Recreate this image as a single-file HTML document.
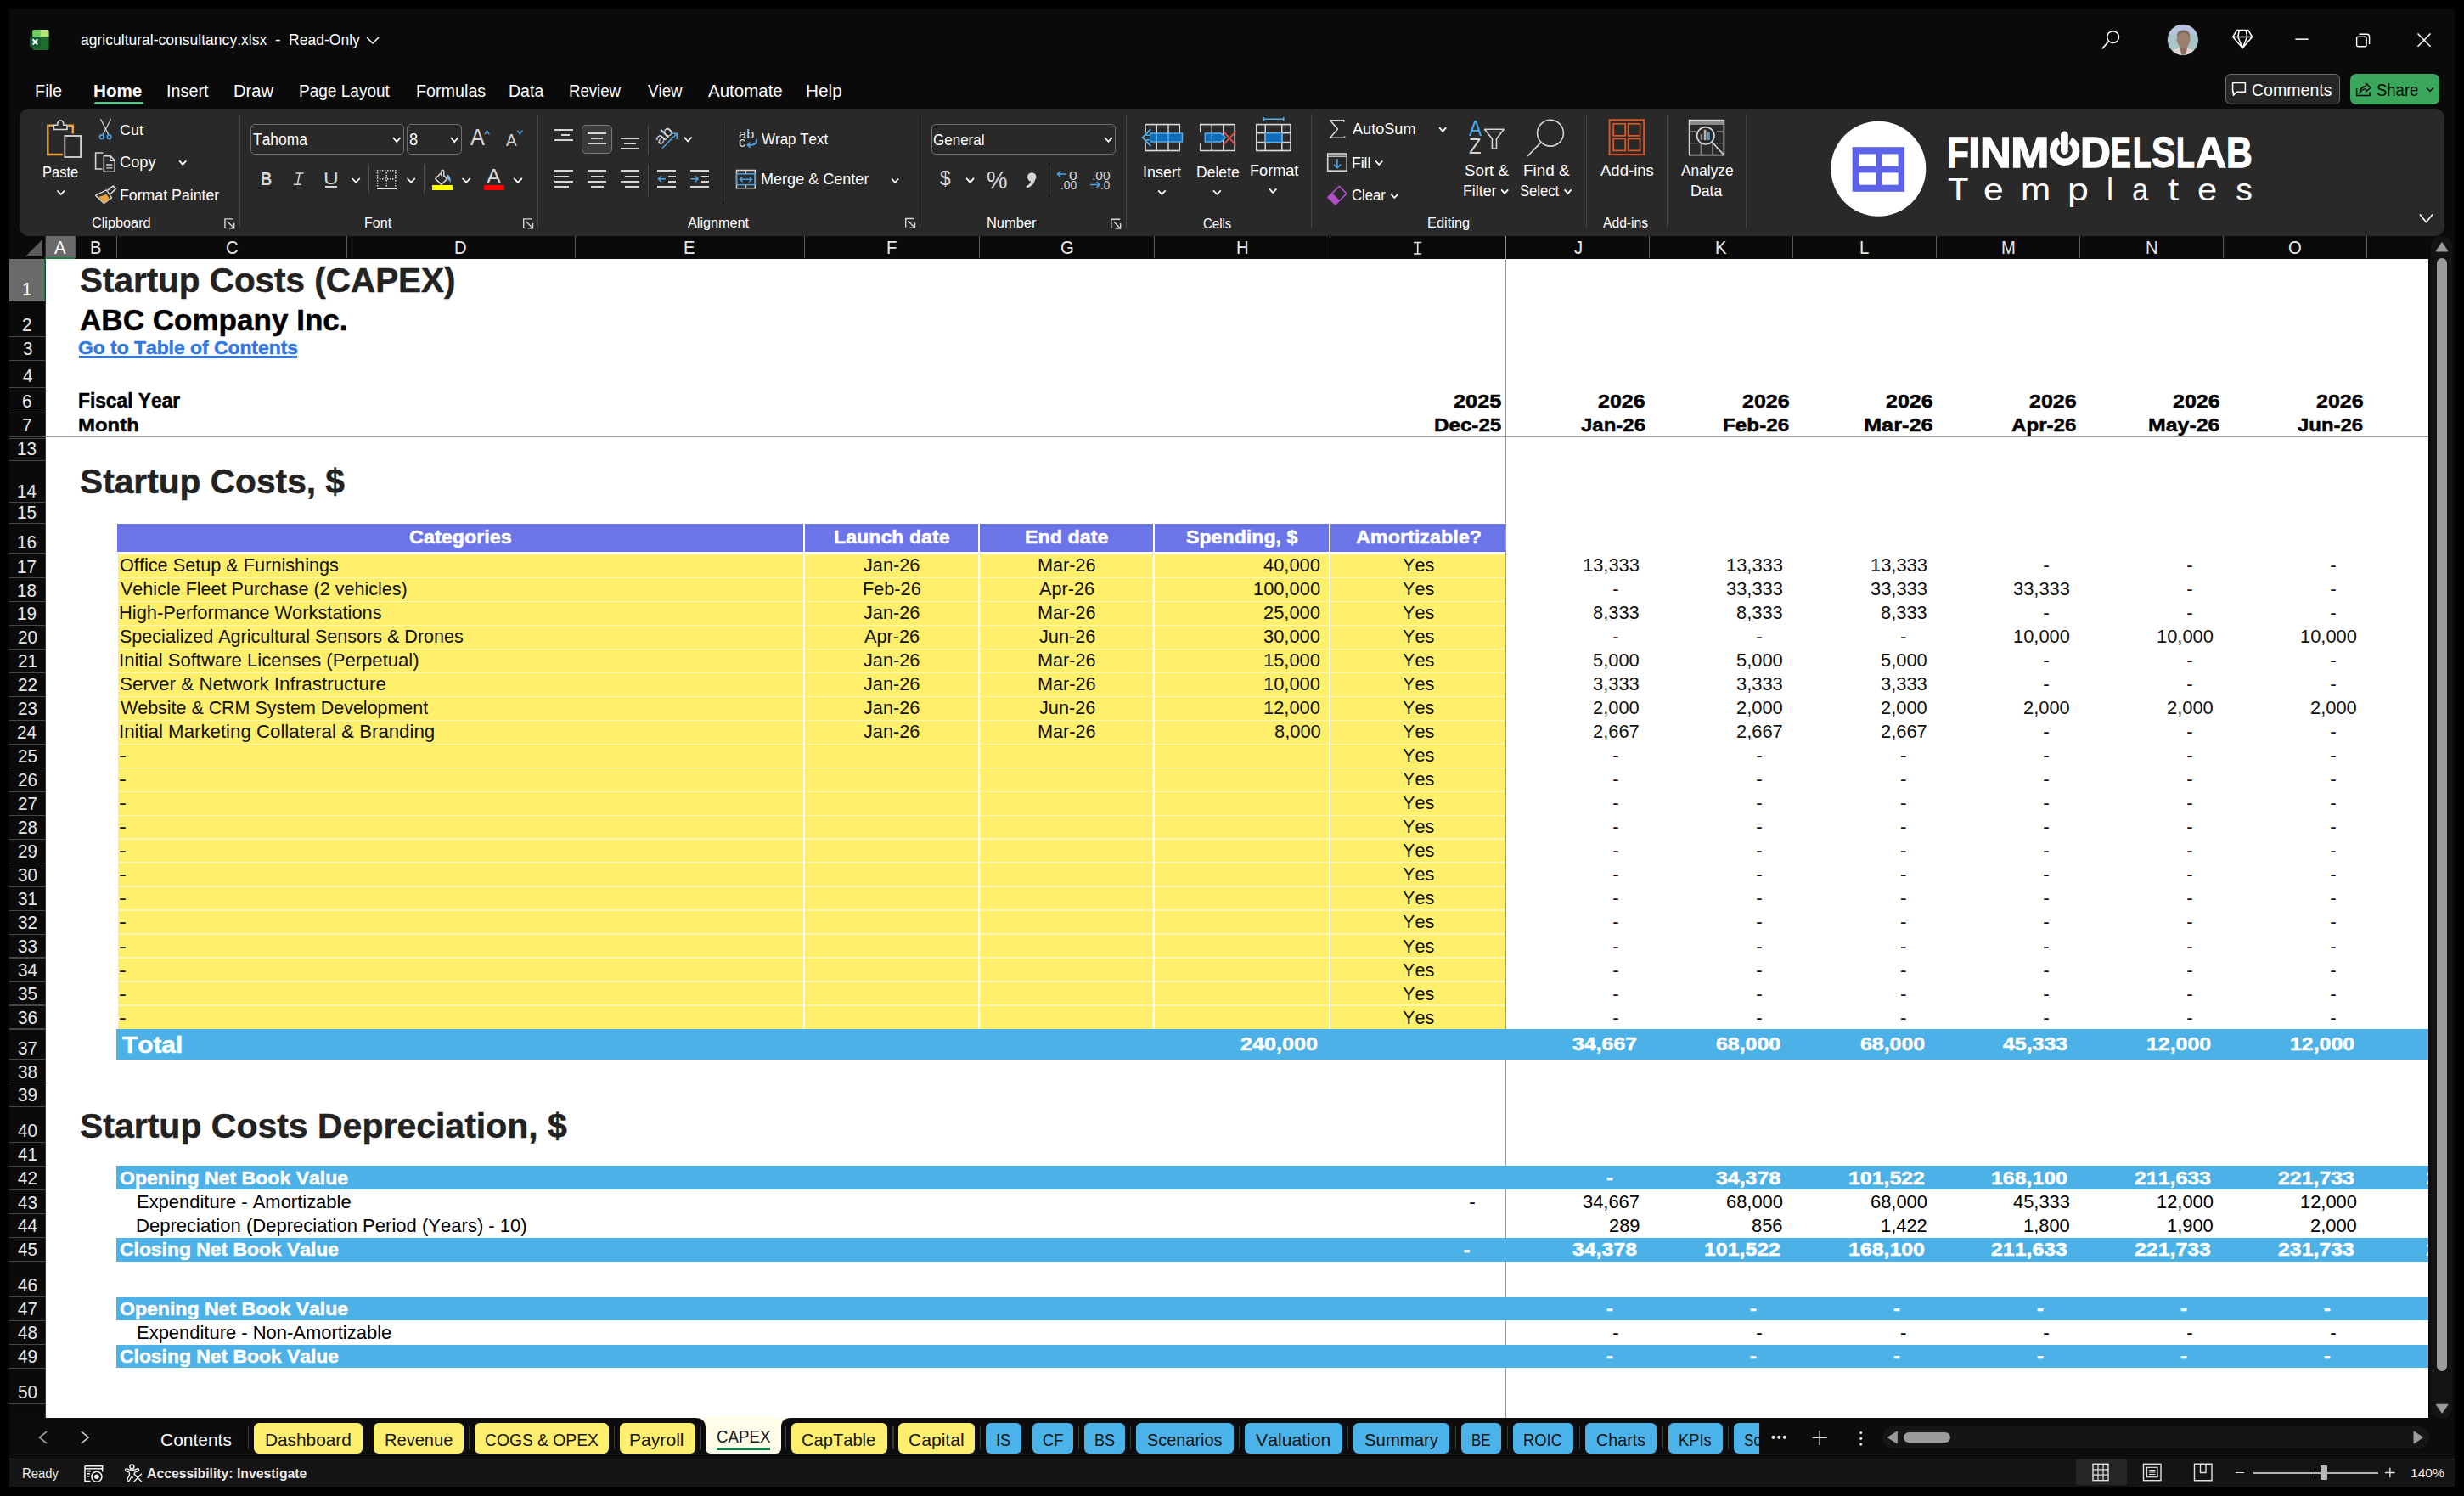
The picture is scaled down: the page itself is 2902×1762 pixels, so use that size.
<!DOCTYPE html>
<html><head><meta charset="utf-8"><style>
html,body{margin:0;padding:0;width:2902px;height:1762px;overflow:hidden;background:#000}
body{position:relative;font-family:"Liberation Sans",sans-serif}
.t{position:absolute;white-space:pre;line-height:1;font-kerning:none;transform-origin:0 0}
.r{position:absolute}
.s{position:absolute;overflow:visible}
</style></head><body>
<div class="r" style="left:0.00px;top:0.00px;width:2902.00px;height:1762.00px;background:#000;"></div>
<div class="r" style="left:11.00px;top:11.00px;width:2879.50px;height:1740.00px;background:#0a0a0a;"></div>
<div class="r" style="left:53.00px;top:305.00px;width:2807.40px;height:1364.80px;background:#fff;"></div>
<div class="r" style="left:11.00px;top:278.00px;width:2849.40px;height:27.00px;background:#0a0a0a;"></div>
<div class="r" style="left:11.00px;top:305.00px;width:42.00px;height:1364.80px;background:#0a0a0a;"></div>
<div class="r" style="left:53.50px;top:278.00px;width:34.50px;height:25.50px;background:#6a6a6a;"></div>
<div class="r" style="left:11.00px;top:305.00px;width:41.00px;height:49.30px;background:#6a6a6a;"></div>
<div class="r" style="left:87.50px;top:278.00px;width:1.00px;height:26.00px;background:#5a5a5a;"></div>
<div class="r" style="left:136.50px;top:278.00px;width:1.00px;height:26.00px;background:#5a5a5a;"></div>
<div class="r" style="left:407.50px;top:278.00px;width:1.00px;height:26.00px;background:#5a5a5a;"></div>
<div class="r" style="left:676.50px;top:278.00px;width:1.00px;height:26.00px;background:#5a5a5a;"></div>
<div class="r" style="left:946.50px;top:278.00px;width:1.00px;height:26.00px;background:#5a5a5a;"></div>
<div class="r" style="left:1152.50px;top:278.00px;width:1.00px;height:26.00px;background:#5a5a5a;"></div>
<div class="r" style="left:1358.50px;top:278.00px;width:1.00px;height:26.00px;background:#5a5a5a;"></div>
<div class="r" style="left:1565.50px;top:278.00px;width:1.00px;height:26.00px;background:#5a5a5a;"></div>
<div class="r" style="left:1772.90px;top:278.00px;width:1.00px;height:26.00px;background:#5a5a5a;"></div>
<div class="r" style="left:1941.50px;top:278.00px;width:1.00px;height:26.00px;background:#5a5a5a;"></div>
<div class="r" style="left:2110.50px;top:278.00px;width:1.00px;height:26.00px;background:#5a5a5a;"></div>
<div class="r" style="left:2280.20px;top:278.00px;width:1.00px;height:26.00px;background:#5a5a5a;"></div>
<div class="r" style="left:2448.50px;top:278.00px;width:1.00px;height:26.00px;background:#5a5a5a;"></div>
<div class="r" style="left:2617.50px;top:278.00px;width:1.00px;height:26.00px;background:#5a5a5a;"></div>
<div class="r" style="left:2786.50px;top:278.00px;width:1.00px;height:26.00px;background:#5a5a5a;"></div>
<div class="r" style="left:53.00px;top:278.00px;width:1.00px;height:26.00px;background:#2a2a2a;"></div>
<div class="r" style="left:53.00px;top:303.00px;width:35.00px;height:2.00px;background:#1f7a3d;"></div>
<div class="r" style="left:52.00px;top:305.00px;width:2.00px;height:49.30px;background:#1f7a3d;"></div>
<div class="r" style="left:11.00px;top:395.80px;width:42.00px;height:1.20px;background:#474747;"></div>
<div class="r" style="left:11.00px;top:423.90px;width:42.00px;height:1.20px;background:#474747;"></div>
<div class="r" style="left:11.00px;top:455.90px;width:42.00px;height:1.20px;background:#474747;"></div>
<div class="r" style="left:11.00px;top:486.00px;width:42.00px;height:1.20px;background:#474747;"></div>
<div class="r" style="left:11.00px;top:513.80px;width:42.00px;height:1.20px;background:#474747;"></div>
<div class="r" style="left:11.00px;top:542.00px;width:42.00px;height:1.20px;background:#474747;"></div>
<div class="r" style="left:11.00px;top:591.10px;width:42.00px;height:1.20px;background:#474747;"></div>
<div class="r" style="left:11.00px;top:616.30px;width:42.00px;height:1.20px;background:#474747;"></div>
<div class="r" style="left:11.00px;top:651.20px;width:42.00px;height:1.20px;background:#474747;"></div>
<div class="r" style="left:11.00px;top:680.10px;width:42.00px;height:1.20px;background:#474747;"></div>
<div class="r" style="left:11.00px;top:708.06px;width:42.00px;height:1.20px;background:#474747;"></div>
<div class="r" style="left:11.00px;top:736.02px;width:42.00px;height:1.20px;background:#474747;"></div>
<div class="r" style="left:11.00px;top:763.98px;width:42.00px;height:1.20px;background:#474747;"></div>
<div class="r" style="left:11.00px;top:791.94px;width:42.00px;height:1.20px;background:#474747;"></div>
<div class="r" style="left:11.00px;top:819.90px;width:42.00px;height:1.20px;background:#474747;"></div>
<div class="r" style="left:11.00px;top:847.86px;width:42.00px;height:1.20px;background:#474747;"></div>
<div class="r" style="left:11.00px;top:875.82px;width:42.00px;height:1.20px;background:#474747;"></div>
<div class="r" style="left:11.00px;top:903.78px;width:42.00px;height:1.20px;background:#474747;"></div>
<div class="r" style="left:11.00px;top:931.74px;width:42.00px;height:1.20px;background:#474747;"></div>
<div class="r" style="left:11.00px;top:959.70px;width:42.00px;height:1.20px;background:#474747;"></div>
<div class="r" style="left:11.00px;top:987.66px;width:42.00px;height:1.20px;background:#474747;"></div>
<div class="r" style="left:11.00px;top:1015.62px;width:42.00px;height:1.20px;background:#474747;"></div>
<div class="r" style="left:11.00px;top:1043.58px;width:42.00px;height:1.20px;background:#474747;"></div>
<div class="r" style="left:11.00px;top:1071.54px;width:42.00px;height:1.20px;background:#474747;"></div>
<div class="r" style="left:11.00px;top:1099.50px;width:42.00px;height:1.20px;background:#474747;"></div>
<div class="r" style="left:11.00px;top:1127.46px;width:42.00px;height:1.20px;background:#474747;"></div>
<div class="r" style="left:11.00px;top:1155.42px;width:42.00px;height:1.20px;background:#474747;"></div>
<div class="r" style="left:11.00px;top:1183.38px;width:42.00px;height:1.20px;background:#474747;"></div>
<div class="r" style="left:11.00px;top:1211.34px;width:42.00px;height:1.20px;background:#474747;"></div>
<div class="r" style="left:11.00px;top:1247.10px;width:42.00px;height:1.20px;background:#474747;"></div>
<div class="r" style="left:11.00px;top:1275.10px;width:42.00px;height:1.20px;background:#474747;"></div>
<div class="r" style="left:11.00px;top:1302.50px;width:42.00px;height:1.20px;background:#474747;"></div>
<div class="r" style="left:11.00px;top:1344.50px;width:42.00px;height:1.20px;background:#474747;"></div>
<div class="r" style="left:11.00px;top:1372.80px;width:42.00px;height:1.20px;background:#474747;"></div>
<div class="r" style="left:11.00px;top:1400.80px;width:42.00px;height:1.20px;background:#474747;"></div>
<div class="r" style="left:11.00px;top:1429.20px;width:42.00px;height:1.20px;background:#474747;"></div>
<div class="r" style="left:11.00px;top:1456.90px;width:42.00px;height:1.20px;background:#474747;"></div>
<div class="r" style="left:11.00px;top:1484.90px;width:42.00px;height:1.20px;background:#474747;"></div>
<div class="r" style="left:11.00px;top:1526.90px;width:42.00px;height:1.20px;background:#474747;"></div>
<div class="r" style="left:11.00px;top:1554.70px;width:42.00px;height:1.20px;background:#474747;"></div>
<div class="r" style="left:11.00px;top:1583.00px;width:42.00px;height:1.20px;background:#474747;"></div>
<div class="r" style="left:11.00px;top:1610.80px;width:42.00px;height:1.20px;background:#474747;"></div>
<div class="r" style="left:11.00px;top:1653.00px;width:42.00px;height:1.20px;background:#474747;"></div>
<div class="r" style="left:11.00px;top:353.80px;width:42.00px;height:1.00px;background:#9a9a9a;"></div>
<div class="r" style="left:11.00px;top:459.80px;width:42.00px;height:1.00px;background:#474747;"></div>
<div class="r" style="left:11.00px;top:516.00px;width:42.00px;height:1.00px;background:#474747;"></div>
<div class="r" style="left:52.50px;top:305.00px;width:1.00px;height:1364.80px;background:#3a3a3a;"></div>
<svg class="s" style="left:30.00px;top:282.00px;" width="20" height="20" viewBox="0 0 20 20"><polygon points="20,0 20,20 0,20" fill="#5a5a5a"/></svg>
<div class="t" style="left:64.24px;top:281.34px;font-size:21.80px;font-weight:400;color:#ffffff;transform:scaleX(0.9300);">A</div>
<div class="t" style="left:105.94px;top:281.34px;font-size:21.80px;font-weight:400;color:#e8e8e8;transform:scaleX(0.9300);">B</div>
<div class="t" style="left:265.55px;top:281.34px;font-size:21.80px;font-weight:400;color:#e8e8e8;transform:scaleX(0.9300);">C</div>
<div class="t" style="left:535.33px;top:281.34px;font-size:21.80px;font-weight:400;color:#e8e8e8;transform:scaleX(0.9300);">D</div>
<div class="t" style="left:805.34px;top:281.34px;font-size:21.80px;font-weight:400;color:#e8e8e8;transform:scaleX(0.9300);">E</div>
<div class="t" style="left:1043.88px;top:281.34px;font-size:21.80px;font-weight:400;color:#e8e8e8;transform:scaleX(0.9300);">F</div>
<div class="t" style="left:1248.86px;top:281.34px;font-size:21.80px;font-weight:400;color:#e8e8e8;transform:scaleX(0.9300);">G</div>
<div class="t" style="left:1455.67px;top:281.34px;font-size:21.80px;font-weight:400;color:#e8e8e8;transform:scaleX(0.9300);">H</div>
<svg class="s" style="left:0;top:0" width="2902" height="400"><path d="M1665.2 285.5 H1674.2 M1665.2 299 H1674.2 M1669.7 285.5 V299" stroke="#e8e8e8" stroke-width="1.6" fill="none"/></svg>
<div class="t" style="left:1853.72px;top:281.34px;font-size:21.80px;font-weight:400;color:#e8e8e8;transform:scaleX(0.9300);">J</div>
<div class="t" style="left:2019.52px;top:281.34px;font-size:21.80px;font-weight:400;color:#e8e8e8;transform:scaleX(0.9300);">K</div>
<div class="t" style="left:2190.22px;top:281.34px;font-size:21.80px;font-weight:400;color:#e8e8e8;transform:scaleX(0.9300);">L</div>
<div class="t" style="left:2356.90px;top:281.34px;font-size:21.80px;font-weight:400;color:#e8e8e8;transform:scaleX(0.9300);">M</div>
<div class="t" style="left:2526.67px;top:281.34px;font-size:21.80px;font-weight:400;color:#e8e8e8;transform:scaleX(0.9300);">N</div>
<div class="t" style="left:2695.12px;top:281.34px;font-size:21.80px;font-weight:400;color:#e8e8e8;transform:scaleX(0.9300);">O</div>
<div class="t" style="left:26.16px;top:330.17px;font-size:21.78px;font-weight:400;color:#ffffff;transform:scaleX(0.9500);">1</div>
<div class="t" style="left:26.45px;top:372.27px;font-size:21.78px;font-weight:400;color:#e8e8e8;transform:scaleX(0.9500);">2</div>
<div class="t" style="left:26.51px;top:400.37px;font-size:21.78px;font-weight:400;color:#e8e8e8;transform:scaleX(0.9500);">3</div>
<div class="t" style="left:26.51px;top:432.37px;font-size:21.78px;font-weight:400;color:#e8e8e8;transform:scaleX(0.9500);">4</div>
<div class="t" style="left:26.38px;top:462.47px;font-size:21.78px;font-weight:400;color:#e8e8e8;transform:scaleX(0.9500);">6</div>
<div class="t" style="left:26.44px;top:490.27px;font-size:21.78px;font-weight:400;color:#e8e8e8;transform:scaleX(0.9500);">7</div>
<div class="t" style="left:20.36px;top:518.47px;font-size:21.78px;font-weight:400;color:#e8e8e8;transform:scaleX(0.9500);">13</div>
<div class="t" style="left:20.21px;top:567.57px;font-size:21.78px;font-weight:400;color:#e8e8e8;transform:scaleX(0.9500);">14</div>
<div class="t" style="left:20.34px;top:592.77px;font-size:21.78px;font-weight:400;color:#e8e8e8;transform:scaleX(0.9500);">15</div>
<div class="t" style="left:20.36px;top:627.67px;font-size:21.78px;font-weight:400;color:#e8e8e8;transform:scaleX(0.9500);">16</div>
<div class="t" style="left:20.43px;top:656.57px;font-size:21.78px;font-weight:400;color:#e8e8e8;transform:scaleX(0.9500);">17</div>
<div class="t" style="left:20.36px;top:684.53px;font-size:21.78px;font-weight:400;color:#e8e8e8;transform:scaleX(0.9500);">18</div>
<div class="t" style="left:20.40px;top:712.49px;font-size:21.78px;font-weight:400;color:#e8e8e8;transform:scaleX(0.9500);">19</div>
<div class="t" style="left:20.58px;top:740.45px;font-size:21.78px;font-weight:400;color:#e8e8e8;transform:scaleX(0.9500);">20</div>
<div class="t" style="left:20.68px;top:768.41px;font-size:21.78px;font-weight:400;color:#e8e8e8;transform:scaleX(0.9500);">21</div>
<div class="t" style="left:20.69px;top:796.37px;font-size:21.78px;font-weight:400;color:#e8e8e8;transform:scaleX(0.9500);">22</div>
<div class="t" style="left:20.63px;top:824.33px;font-size:21.78px;font-weight:400;color:#e8e8e8;transform:scaleX(0.9500);">23</div>
<div class="t" style="left:20.48px;top:852.29px;font-size:21.78px;font-weight:400;color:#e8e8e8;transform:scaleX(0.9500);">24</div>
<div class="t" style="left:20.61px;top:880.25px;font-size:21.78px;font-weight:400;color:#e8e8e8;transform:scaleX(0.9500);">25</div>
<div class="t" style="left:20.63px;top:908.21px;font-size:21.78px;font-weight:400;color:#e8e8e8;transform:scaleX(0.9500);">26</div>
<div class="t" style="left:20.69px;top:936.17px;font-size:21.78px;font-weight:400;color:#e8e8e8;transform:scaleX(0.9500);">27</div>
<div class="t" style="left:20.62px;top:964.13px;font-size:21.78px;font-weight:400;color:#e8e8e8;transform:scaleX(0.9500);">28</div>
<div class="t" style="left:20.66px;top:992.09px;font-size:21.78px;font-weight:400;color:#e8e8e8;transform:scaleX(0.9500);">29</div>
<div class="t" style="left:20.70px;top:1020.05px;font-size:21.78px;font-weight:400;color:#e8e8e8;transform:scaleX(0.9500);">30</div>
<div class="t" style="left:20.81px;top:1048.01px;font-size:21.78px;font-weight:400;color:#e8e8e8;transform:scaleX(0.9500);">31</div>
<div class="t" style="left:20.82px;top:1075.97px;font-size:21.78px;font-weight:400;color:#e8e8e8;transform:scaleX(0.9500);">32</div>
<div class="t" style="left:20.76px;top:1103.93px;font-size:21.78px;font-weight:400;color:#e8e8e8;transform:scaleX(0.9500);">33</div>
<div class="t" style="left:20.60px;top:1131.89px;font-size:21.78px;font-weight:400;color:#e8e8e8;transform:scaleX(0.9500);">34</div>
<div class="t" style="left:20.73px;top:1159.85px;font-size:21.78px;font-weight:400;color:#e8e8e8;transform:scaleX(0.9500);">35</div>
<div class="t" style="left:20.76px;top:1187.81px;font-size:21.78px;font-weight:400;color:#e8e8e8;transform:scaleX(0.9500);">36</div>
<div class="t" style="left:20.82px;top:1223.57px;font-size:21.78px;font-weight:400;color:#e8e8e8;transform:scaleX(0.9500);">37</div>
<div class="t" style="left:20.75px;top:1251.57px;font-size:21.78px;font-weight:400;color:#e8e8e8;transform:scaleX(0.9500);">38</div>
<div class="t" style="left:20.79px;top:1278.97px;font-size:21.78px;font-weight:400;color:#e8e8e8;transform:scaleX(0.9500);">39</div>
<div class="t" style="left:20.86px;top:1320.97px;font-size:21.78px;font-weight:400;color:#e8e8e8;transform:scaleX(0.9500);">40</div>
<div class="t" style="left:20.96px;top:1349.27px;font-size:21.78px;font-weight:400;color:#e8e8e8;transform:scaleX(0.9500);">41</div>
<div class="t" style="left:20.98px;top:1377.27px;font-size:21.78px;font-weight:400;color:#e8e8e8;transform:scaleX(0.9500);">42</div>
<div class="t" style="left:20.91px;top:1405.67px;font-size:21.78px;font-weight:400;color:#e8e8e8;transform:scaleX(0.9500);">43</div>
<div class="t" style="left:20.76px;top:1433.37px;font-size:21.78px;font-weight:400;color:#e8e8e8;transform:scaleX(0.9500);">44</div>
<div class="t" style="left:20.89px;top:1461.37px;font-size:21.78px;font-weight:400;color:#e8e8e8;transform:scaleX(0.9500);">45</div>
<div class="t" style="left:20.91px;top:1503.37px;font-size:21.78px;font-weight:400;color:#e8e8e8;transform:scaleX(0.9500);">46</div>
<div class="t" style="left:20.98px;top:1531.17px;font-size:21.78px;font-weight:400;color:#e8e8e8;transform:scaleX(0.9500);">47</div>
<div class="t" style="left:20.91px;top:1559.47px;font-size:21.78px;font-weight:400;color:#e8e8e8;transform:scaleX(0.9500);">48</div>
<div class="t" style="left:20.95px;top:1587.27px;font-size:21.78px;font-weight:400;color:#e8e8e8;transform:scaleX(0.9500);">49</div>
<div class="t" style="left:20.68px;top:1629.47px;font-size:21.78px;font-weight:400;color:#e8e8e8;transform:scaleX(0.9500);">50</div>
<div class="t" style="left:94.44px;top:310.20px;font-size:40.41px;font-weight:700;color:#222222;transform:scaleX(1.0005);-webkit-text-stroke:0.5px #222222;">Startup Costs (CAPEX)</div>
<div class="t" style="left:93.73px;top:358.70px;font-size:35.32px;font-weight:700;color:#000000;transform:scaleX(0.9927);-webkit-text-stroke:0.5px #000000;">ABC Company Inc.</div>
<div class="t" style="left:91.76px;top:398.94px;font-size:21.22px;font-weight:700;color:#2f78e6;transform:scaleX(1.0769);-webkit-text-stroke:0.5px #2f78e6;">Go to Table of Contents</div>
<div class="r" style="left:92.70px;top:419.30px;width:257.10px;height:2.30px;background:#2f78e6;"></div>
<div class="t" style="left:91.98px;top:461.34px;font-size:23.11px;font-weight:700;color:#000;transform:scaleX(0.9846);-webkit-text-stroke:0.5px #000;">Fiscal Year</div>
<div class="t" style="left:91.90px;top:489.28px;font-size:22.82px;font-weight:700;color:#000;transform:scaleX(1.0491);-webkit-text-stroke:0.5px #000;">Month</div>
<div class="t" style="left:1712.31px;top:461.74px;font-size:22.64px;font-weight:700;color:#000;transform:scaleX(1.1200);-webkit-text-stroke:0.5px #000;">2025</div>
<div class="t" style="left:1689.38px;top:489.26px;font-size:22.97px;font-weight:700;color:#000;transform:scaleX(1.0527);-webkit-text-stroke:0.5px #000;">Dec-25</div>
<div class="t" style="left:1882.33px;top:461.74px;font-size:22.64px;font-weight:700;color:#000;transform:scaleX(1.1035);-webkit-text-stroke:0.5px #000;">2026</div>
<div class="t" style="left:1861.84px;top:489.26px;font-size:22.97px;font-weight:700;color:#000;transform:scaleX(1.0449);-webkit-text-stroke:0.5px #000;">Jan-26</div>
<div class="t" style="left:2051.53px;top:461.74px;font-size:22.64px;font-weight:700;color:#000;transform:scaleX(1.1035);-webkit-text-stroke:0.5px #000;">2026</div>
<div class="t" style="left:2028.88px;top:489.26px;font-size:22.97px;font-weight:700;color:#000;transform:scaleX(1.0565);-webkit-text-stroke:0.5px #000;">Feb-26</div>
<div class="t" style="left:2220.83px;top:461.74px;font-size:22.64px;font-weight:700;color:#000;transform:scaleX(1.1035);-webkit-text-stroke:0.5px #000;">2026</div>
<div class="t" style="left:2194.81px;top:489.26px;font-size:22.97px;font-weight:700;color:#000;transform:scaleX(1.1024);-webkit-text-stroke:0.5px #000;">Mar-26</div>
<div class="t" style="left:2389.63px;top:461.74px;font-size:22.64px;font-weight:700;color:#000;transform:scaleX(1.1035);-webkit-text-stroke:0.5px #000;">2026</div>
<div class="t" style="left:2368.80px;top:489.26px;font-size:22.97px;font-weight:700;color:#000;transform:scaleX(1.0499);-webkit-text-stroke:0.5px #000;">Apr-26</div>
<div class="t" style="left:2558.83px;top:461.74px;font-size:22.64px;font-weight:700;color:#000;transform:scaleX(1.1035);-webkit-text-stroke:0.5px #000;">2026</div>
<div class="t" style="left:2530.04px;top:489.26px;font-size:22.97px;font-weight:700;color:#000;transform:scaleX(1.0834);-webkit-text-stroke:0.5px #000;">May-26</div>
<div class="t" style="left:2727.63px;top:461.74px;font-size:22.64px;font-weight:700;color:#000;transform:scaleX(1.1035);-webkit-text-stroke:0.5px #000;">2026</div>
<div class="t" style="left:2706.14px;top:489.26px;font-size:22.97px;font-weight:700;color:#000;transform:scaleX(1.0406);-webkit-text-stroke:0.5px #000;">Jun-26</div>
<div class="t" style="left:94.33px;top:546.60px;font-size:40.99px;font-weight:700;color:#222222;transform:scaleX(0.9928);-webkit-text-stroke:0.5px #222222;">Startup Costs, $</div>
<div class="r" style="left:138.00px;top:617.00px;width:1635.00px;height:33.00px;background:#6b74e8;"></div>
<div class="t" style="left:482.04px;top:622.33px;font-size:22.53px;font-weight:700;color:#fff;transform:scaleX(1.0385);-webkit-text-stroke:0.5px #fff;">Categories</div>
<div class="t" style="left:982.15px;top:622.33px;font-size:22.53px;font-weight:700;color:#fff;transform:scaleX(1.0298);-webkit-text-stroke:0.5px #fff;">Launch date</div>
<div class="t" style="left:1207.14px;top:622.33px;font-size:22.53px;font-weight:700;color:#fff;transform:scaleX(1.0349);-webkit-text-stroke:0.5px #fff;">End date</div>
<div class="t" style="left:1397.33px;top:622.33px;font-size:22.53px;font-weight:700;color:#fff;transform:scaleX(1.0292);-webkit-text-stroke:0.5px #fff;">Spending, $</div>
<div class="t" style="left:1596.82px;top:622.33px;font-size:22.53px;font-weight:700;color:#fff;transform:scaleX(1.0373);-webkit-text-stroke:0.5px #fff;">Amortizable?</div>
<div class="r" style="left:946.00px;top:617.00px;width:2.00px;height:33.00px;background:#ffffff;"></div>
<div class="r" style="left:1152.00px;top:617.00px;width:2.00px;height:33.00px;background:#ffffff;"></div>
<div class="r" style="left:1358.00px;top:617.00px;width:2.00px;height:33.00px;background:#ffffff;"></div>
<div class="r" style="left:1565.00px;top:617.00px;width:2.00px;height:33.00px;background:#ffffff;"></div>
<div class="r" style="left:138.50px;top:652.60px;width:1634.50px;height:559.34px;background:#ffef6b;"></div>
<div class="r" style="left:138.50px;top:679.90px;width:1634.50px;height:1.60px;background:#fff6b8;"></div>
<div class="r" style="left:138.50px;top:707.86px;width:1634.50px;height:1.60px;background:#fff6b8;"></div>
<div class="r" style="left:138.50px;top:735.82px;width:1634.50px;height:1.60px;background:#fff6b8;"></div>
<div class="r" style="left:138.50px;top:763.78px;width:1634.50px;height:1.60px;background:#fff6b8;"></div>
<div class="r" style="left:138.50px;top:791.74px;width:1634.50px;height:1.60px;background:#fff6b8;"></div>
<div class="r" style="left:138.50px;top:819.70px;width:1634.50px;height:1.60px;background:#fff6b8;"></div>
<div class="r" style="left:138.50px;top:847.66px;width:1634.50px;height:1.60px;background:#fff6b8;"></div>
<div class="r" style="left:138.50px;top:875.62px;width:1634.50px;height:1.60px;background:#fff6b8;"></div>
<div class="r" style="left:138.50px;top:903.58px;width:1634.50px;height:1.60px;background:#fff6b8;"></div>
<div class="r" style="left:138.50px;top:931.54px;width:1634.50px;height:1.60px;background:#fff6b8;"></div>
<div class="r" style="left:138.50px;top:959.50px;width:1634.50px;height:1.60px;background:#fff6b8;"></div>
<div class="r" style="left:138.50px;top:987.46px;width:1634.50px;height:1.60px;background:#fff6b8;"></div>
<div class="r" style="left:138.50px;top:1015.42px;width:1634.50px;height:1.60px;background:#fff6b8;"></div>
<div class="r" style="left:138.50px;top:1043.38px;width:1634.50px;height:1.60px;background:#fff6b8;"></div>
<div class="r" style="left:138.50px;top:1071.34px;width:1634.50px;height:1.60px;background:#fff6b8;"></div>
<div class="r" style="left:138.50px;top:1099.30px;width:1634.50px;height:1.60px;background:#fff6b8;"></div>
<div class="r" style="left:138.50px;top:1127.26px;width:1634.50px;height:1.60px;background:#fff6b8;"></div>
<div class="r" style="left:138.50px;top:1155.22px;width:1634.50px;height:1.60px;background:#fff6b8;"></div>
<div class="r" style="left:138.50px;top:1183.18px;width:1634.50px;height:1.60px;background:#fff6b8;"></div>
<div class="r" style="left:946.00px;top:651.80px;width:2.00px;height:560.14px;background:#ffffff;"></div>
<div class="r" style="left:1152.00px;top:651.80px;width:2.00px;height:560.14px;background:#ffffff;"></div>
<div class="r" style="left:1358.00px;top:651.80px;width:2.00px;height:560.14px;background:#ffffff;"></div>
<div class="r" style="left:1565.00px;top:651.80px;width:2.00px;height:560.14px;background:#ffffff;"></div>
<div class="t" style="left:140.57px;top:654.73px;font-size:22.53px;font-weight:400;color:#111111;transform:scaleX(0.9632);">Office Setup &amp; Furnishings</div>
<div class="t" style="left:1017.44px;top:654.73px;font-size:22.53px;font-weight:400;color:#111111;transform:scaleX(0.9630);">Jan-26</div>
<div class="t" style="left:1221.73px;top:654.73px;font-size:22.53px;font-weight:400;color:#111111;transform:scaleX(0.9630);">Mar-26</div>
<div class="t" style="left:1488.39px;top:655.00px;font-size:22.21px;font-weight:400;color:#111111;transform:scaleX(0.9860);">40,000</div>
<div class="t" style="left:1652.46px;top:654.73px;font-size:22.53px;font-weight:400;color:#111111;transform:scaleX(0.9630);">Yes</div>
<div class="t" style="left:1863.99px;top:655.00px;font-size:22.21px;font-weight:400;color:#111111;transform:scaleX(0.9860);">13,333</div>
<div class="t" style="left:2032.99px;top:655.00px;font-size:22.21px;font-weight:400;color:#111111;transform:scaleX(0.9860);">13,333</div>
<div class="t" style="left:2202.69px;top:655.00px;font-size:22.21px;font-weight:400;color:#111111;transform:scaleX(0.9860);">13,333</div>
<div class="t" style="left:2406.25px;top:654.73px;font-size:22.53px;font-weight:400;color:#111111;transform:scaleX(1.0000);">-</div>
<div class="t" style="left:2575.25px;top:654.73px;font-size:22.53px;font-weight:400;color:#111111;transform:scaleX(1.0000);">-</div>
<div class="t" style="left:2744.25px;top:654.73px;font-size:22.53px;font-weight:400;color:#111111;transform:scaleX(1.0000);">-</div>
<div class="t" style="left:141.51px;top:682.78px;font-size:22.53px;font-weight:400;color:#111111;transform:scaleX(0.9570);">Vehicle Fleet Purchase (2 vehicles)</div>
<div class="t" style="left:1015.52px;top:682.78px;font-size:22.53px;font-weight:400;color:#111111;transform:scaleX(0.9630);">Feb-26</div>
<div class="t" style="left:1224.40px;top:682.78px;font-size:22.53px;font-weight:400;color:#111111;transform:scaleX(0.9630);">Apr-26</div>
<div class="t" style="left:1476.21px;top:683.05px;font-size:22.21px;font-weight:400;color:#111111;transform:scaleX(0.9860);">100,000</div>
<div class="t" style="left:1652.46px;top:682.78px;font-size:22.53px;font-weight:400;color:#111111;transform:scaleX(0.9630);">Yes</div>
<div class="t" style="left:1899.25px;top:682.78px;font-size:22.53px;font-weight:400;color:#111111;transform:scaleX(1.0000);">-</div>
<div class="t" style="left:2032.99px;top:683.05px;font-size:22.21px;font-weight:400;color:#111111;transform:scaleX(0.9860);">33,333</div>
<div class="t" style="left:2202.69px;top:683.05px;font-size:22.21px;font-weight:400;color:#111111;transform:scaleX(0.9860);">33,333</div>
<div class="t" style="left:2370.99px;top:683.05px;font-size:22.21px;font-weight:400;color:#111111;transform:scaleX(0.9860);">33,333</div>
<div class="t" style="left:2575.25px;top:682.78px;font-size:22.53px;font-weight:400;color:#111111;transform:scaleX(1.0000);">-</div>
<div class="t" style="left:2744.25px;top:682.78px;font-size:22.53px;font-weight:400;color:#111111;transform:scaleX(1.0000);">-</div>
<div class="t" style="left:139.81px;top:710.83px;font-size:22.53px;font-weight:400;color:#111111;transform:scaleX(0.9706);">High-Performance Workstations</div>
<div class="t" style="left:1017.44px;top:710.83px;font-size:22.53px;font-weight:400;color:#111111;transform:scaleX(0.9630);">Jan-26</div>
<div class="t" style="left:1221.73px;top:710.83px;font-size:22.53px;font-weight:400;color:#111111;transform:scaleX(0.9630);">Mar-26</div>
<div class="t" style="left:1488.39px;top:711.10px;font-size:22.21px;font-weight:400;color:#111111;transform:scaleX(0.9860);">25,000</div>
<div class="t" style="left:1652.46px;top:710.83px;font-size:22.53px;font-weight:400;color:#111111;transform:scaleX(0.9630);">Yes</div>
<div class="t" style="left:1876.17px;top:711.10px;font-size:22.21px;font-weight:400;color:#111111;transform:scaleX(0.9860);">8,333</div>
<div class="t" style="left:2045.17px;top:711.10px;font-size:22.21px;font-weight:400;color:#111111;transform:scaleX(0.9860);">8,333</div>
<div class="t" style="left:2214.87px;top:711.10px;font-size:22.21px;font-weight:400;color:#111111;transform:scaleX(0.9860);">8,333</div>
<div class="t" style="left:2406.25px;top:710.83px;font-size:22.53px;font-weight:400;color:#111111;transform:scaleX(1.0000);">-</div>
<div class="t" style="left:2575.25px;top:710.83px;font-size:22.53px;font-weight:400;color:#111111;transform:scaleX(1.0000);">-</div>
<div class="t" style="left:2744.25px;top:710.83px;font-size:22.53px;font-weight:400;color:#111111;transform:scaleX(1.0000);">-</div>
<div class="t" style="left:140.62px;top:738.88px;font-size:22.53px;font-weight:400;color:#111111;transform:scaleX(0.9570);">Specialized Agricultural Sensors &amp; Drones</div>
<div class="t" style="left:1018.20px;top:738.88px;font-size:22.53px;font-weight:400;color:#111111;transform:scaleX(0.9630);">Apr-26</div>
<div class="t" style="left:1223.64px;top:738.88px;font-size:22.53px;font-weight:400;color:#111111;transform:scaleX(0.9630);">Jun-26</div>
<div class="t" style="left:1488.39px;top:739.15px;font-size:22.21px;font-weight:400;color:#111111;transform:scaleX(0.9860);">30,000</div>
<div class="t" style="left:1652.46px;top:738.88px;font-size:22.53px;font-weight:400;color:#111111;transform:scaleX(0.9630);">Yes</div>
<div class="t" style="left:1899.25px;top:738.88px;font-size:22.53px;font-weight:400;color:#111111;transform:scaleX(1.0000);">-</div>
<div class="t" style="left:2068.25px;top:738.88px;font-size:22.53px;font-weight:400;color:#111111;transform:scaleX(1.0000);">-</div>
<div class="t" style="left:2237.95px;top:738.88px;font-size:22.53px;font-weight:400;color:#111111;transform:scaleX(1.0000);">-</div>
<div class="t" style="left:2370.89px;top:739.15px;font-size:22.21px;font-weight:400;color:#111111;transform:scaleX(0.9860);">10,000</div>
<div class="t" style="left:2539.89px;top:739.15px;font-size:22.21px;font-weight:400;color:#111111;transform:scaleX(0.9860);">10,000</div>
<div class="t" style="left:2708.89px;top:739.15px;font-size:22.21px;font-weight:400;color:#111111;transform:scaleX(0.9860);">10,000</div>
<div class="t" style="left:139.56px;top:766.93px;font-size:22.53px;font-weight:400;color:#111111;transform:scaleX(0.9811);">Initial Software Licenses (Perpetual)</div>
<div class="t" style="left:1017.44px;top:766.93px;font-size:22.53px;font-weight:400;color:#111111;transform:scaleX(0.9630);">Jan-26</div>
<div class="t" style="left:1221.73px;top:766.93px;font-size:22.53px;font-weight:400;color:#111111;transform:scaleX(0.9630);">Mar-26</div>
<div class="t" style="left:1488.39px;top:767.20px;font-size:22.21px;font-weight:400;color:#111111;transform:scaleX(0.9860);">15,000</div>
<div class="t" style="left:1652.46px;top:766.93px;font-size:22.53px;font-weight:400;color:#111111;transform:scaleX(0.9630);">Yes</div>
<div class="t" style="left:1876.06px;top:767.20px;font-size:22.21px;font-weight:400;color:#111111;transform:scaleX(0.9860);">5,000</div>
<div class="t" style="left:2045.06px;top:767.20px;font-size:22.21px;font-weight:400;color:#111111;transform:scaleX(0.9860);">5,000</div>
<div class="t" style="left:2214.76px;top:767.20px;font-size:22.21px;font-weight:400;color:#111111;transform:scaleX(0.9860);">5,000</div>
<div class="t" style="left:2406.25px;top:766.93px;font-size:22.53px;font-weight:400;color:#111111;transform:scaleX(1.0000);">-</div>
<div class="t" style="left:2575.25px;top:766.93px;font-size:22.53px;font-weight:400;color:#111111;transform:scaleX(1.0000);">-</div>
<div class="t" style="left:2744.25px;top:766.93px;font-size:22.53px;font-weight:400;color:#111111;transform:scaleX(1.0000);">-</div>
<div class="t" style="left:140.58px;top:794.98px;font-size:22.53px;font-weight:400;color:#111111;transform:scaleX(0.9956);">Server &amp; Network Infrastructure</div>
<div class="t" style="left:1017.44px;top:794.98px;font-size:22.53px;font-weight:400;color:#111111;transform:scaleX(0.9630);">Jan-26</div>
<div class="t" style="left:1221.73px;top:794.98px;font-size:22.53px;font-weight:400;color:#111111;transform:scaleX(0.9630);">Mar-26</div>
<div class="t" style="left:1488.39px;top:795.25px;font-size:22.21px;font-weight:400;color:#111111;transform:scaleX(0.9860);">10,000</div>
<div class="t" style="left:1652.46px;top:794.98px;font-size:22.53px;font-weight:400;color:#111111;transform:scaleX(0.9630);">Yes</div>
<div class="t" style="left:1876.17px;top:795.25px;font-size:22.21px;font-weight:400;color:#111111;transform:scaleX(0.9860);">3,333</div>
<div class="t" style="left:2045.17px;top:795.25px;font-size:22.21px;font-weight:400;color:#111111;transform:scaleX(0.9860);">3,333</div>
<div class="t" style="left:2214.87px;top:795.25px;font-size:22.21px;font-weight:400;color:#111111;transform:scaleX(0.9860);">3,333</div>
<div class="t" style="left:2406.25px;top:794.98px;font-size:22.53px;font-weight:400;color:#111111;transform:scaleX(1.0000);">-</div>
<div class="t" style="left:2575.25px;top:794.98px;font-size:22.53px;font-weight:400;color:#111111;transform:scaleX(1.0000);">-</div>
<div class="t" style="left:2744.25px;top:794.98px;font-size:22.53px;font-weight:400;color:#111111;transform:scaleX(1.0000);">-</div>
<div class="t" style="left:141.51px;top:823.03px;font-size:22.53px;font-weight:400;color:#111111;transform:scaleX(0.9520);">Website &amp; CRM System Development</div>
<div class="t" style="left:1017.44px;top:823.03px;font-size:22.53px;font-weight:400;color:#111111;transform:scaleX(0.9630);">Jan-26</div>
<div class="t" style="left:1223.64px;top:823.03px;font-size:22.53px;font-weight:400;color:#111111;transform:scaleX(0.9630);">Jun-26</div>
<div class="t" style="left:1488.39px;top:823.30px;font-size:22.21px;font-weight:400;color:#111111;transform:scaleX(0.9860);">12,000</div>
<div class="t" style="left:1652.46px;top:823.03px;font-size:22.53px;font-weight:400;color:#111111;transform:scaleX(0.9630);">Yes</div>
<div class="t" style="left:1876.06px;top:823.30px;font-size:22.21px;font-weight:400;color:#111111;transform:scaleX(0.9860);">2,000</div>
<div class="t" style="left:2045.06px;top:823.30px;font-size:22.21px;font-weight:400;color:#111111;transform:scaleX(0.9860);">2,000</div>
<div class="t" style="left:2214.76px;top:823.30px;font-size:22.21px;font-weight:400;color:#111111;transform:scaleX(0.9860);">2,000</div>
<div class="t" style="left:2383.06px;top:823.30px;font-size:22.21px;font-weight:400;color:#111111;transform:scaleX(0.9860);">2,000</div>
<div class="t" style="left:2552.06px;top:823.30px;font-size:22.21px;font-weight:400;color:#111111;transform:scaleX(0.9860);">2,000</div>
<div class="t" style="left:2721.06px;top:823.30px;font-size:22.21px;font-weight:400;color:#111111;transform:scaleX(0.9860);">2,000</div>
<div class="t" style="left:139.55px;top:851.08px;font-size:22.53px;font-weight:400;color:#111111;transform:scaleX(0.9880);">Initial Marketing Collateral &amp; Branding</div>
<div class="t" style="left:1017.44px;top:851.08px;font-size:22.53px;font-weight:400;color:#111111;transform:scaleX(0.9630);">Jan-26</div>
<div class="t" style="left:1221.73px;top:851.08px;font-size:22.53px;font-weight:400;color:#111111;transform:scaleX(0.9630);">Mar-26</div>
<div class="t" style="left:1500.56px;top:851.35px;font-size:22.21px;font-weight:400;color:#111111;transform:scaleX(0.9860);">8,000</div>
<div class="t" style="left:1652.46px;top:851.08px;font-size:22.53px;font-weight:400;color:#111111;transform:scaleX(0.9630);">Yes</div>
<div class="t" style="left:1876.31px;top:851.35px;font-size:22.21px;font-weight:400;color:#111111;transform:scaleX(0.9860);">2,667</div>
<div class="t" style="left:2045.31px;top:851.35px;font-size:22.21px;font-weight:400;color:#111111;transform:scaleX(0.9860);">2,667</div>
<div class="t" style="left:2215.01px;top:851.35px;font-size:22.21px;font-weight:400;color:#111111;transform:scaleX(0.9860);">2,667</div>
<div class="t" style="left:2406.25px;top:851.08px;font-size:22.53px;font-weight:400;color:#111111;transform:scaleX(1.0000);">-</div>
<div class="t" style="left:2575.25px;top:851.08px;font-size:22.53px;font-weight:400;color:#111111;transform:scaleX(1.0000);">-</div>
<div class="t" style="left:2744.25px;top:851.08px;font-size:22.53px;font-weight:400;color:#111111;transform:scaleX(1.0000);">-</div>
<div class="t" style="left:140.02px;top:879.13px;font-size:22.53px;font-weight:400;color:#111111;transform:scaleX(1.1818);">-</div>
<div class="t" style="left:1652.46px;top:879.13px;font-size:22.53px;font-weight:400;color:#111111;transform:scaleX(0.9630);">Yes</div>
<div class="t" style="left:1899.25px;top:879.13px;font-size:22.53px;font-weight:400;color:#111111;transform:scaleX(1.0000);">-</div>
<div class="t" style="left:2068.25px;top:879.13px;font-size:22.53px;font-weight:400;color:#111111;transform:scaleX(1.0000);">-</div>
<div class="t" style="left:2237.95px;top:879.13px;font-size:22.53px;font-weight:400;color:#111111;transform:scaleX(1.0000);">-</div>
<div class="t" style="left:2406.25px;top:879.13px;font-size:22.53px;font-weight:400;color:#111111;transform:scaleX(1.0000);">-</div>
<div class="t" style="left:2575.25px;top:879.13px;font-size:22.53px;font-weight:400;color:#111111;transform:scaleX(1.0000);">-</div>
<div class="t" style="left:2744.25px;top:879.13px;font-size:22.53px;font-weight:400;color:#111111;transform:scaleX(1.0000);">-</div>
<div class="t" style="left:140.02px;top:907.18px;font-size:22.53px;font-weight:400;color:#111111;transform:scaleX(1.1818);">-</div>
<div class="t" style="left:1652.46px;top:907.18px;font-size:22.53px;font-weight:400;color:#111111;transform:scaleX(0.9630);">Yes</div>
<div class="t" style="left:1899.25px;top:907.18px;font-size:22.53px;font-weight:400;color:#111111;transform:scaleX(1.0000);">-</div>
<div class="t" style="left:2068.25px;top:907.18px;font-size:22.53px;font-weight:400;color:#111111;transform:scaleX(1.0000);">-</div>
<div class="t" style="left:2237.95px;top:907.18px;font-size:22.53px;font-weight:400;color:#111111;transform:scaleX(1.0000);">-</div>
<div class="t" style="left:2406.25px;top:907.18px;font-size:22.53px;font-weight:400;color:#111111;transform:scaleX(1.0000);">-</div>
<div class="t" style="left:2575.25px;top:907.18px;font-size:22.53px;font-weight:400;color:#111111;transform:scaleX(1.0000);">-</div>
<div class="t" style="left:2744.25px;top:907.18px;font-size:22.53px;font-weight:400;color:#111111;transform:scaleX(1.0000);">-</div>
<div class="t" style="left:140.02px;top:935.23px;font-size:22.53px;font-weight:400;color:#111111;transform:scaleX(1.1818);">-</div>
<div class="t" style="left:1652.46px;top:935.23px;font-size:22.53px;font-weight:400;color:#111111;transform:scaleX(0.9630);">Yes</div>
<div class="t" style="left:1899.25px;top:935.23px;font-size:22.53px;font-weight:400;color:#111111;transform:scaleX(1.0000);">-</div>
<div class="t" style="left:2068.25px;top:935.23px;font-size:22.53px;font-weight:400;color:#111111;transform:scaleX(1.0000);">-</div>
<div class="t" style="left:2237.95px;top:935.23px;font-size:22.53px;font-weight:400;color:#111111;transform:scaleX(1.0000);">-</div>
<div class="t" style="left:2406.25px;top:935.23px;font-size:22.53px;font-weight:400;color:#111111;transform:scaleX(1.0000);">-</div>
<div class="t" style="left:2575.25px;top:935.23px;font-size:22.53px;font-weight:400;color:#111111;transform:scaleX(1.0000);">-</div>
<div class="t" style="left:2744.25px;top:935.23px;font-size:22.53px;font-weight:400;color:#111111;transform:scaleX(1.0000);">-</div>
<div class="t" style="left:140.02px;top:963.28px;font-size:22.53px;font-weight:400;color:#111111;transform:scaleX(1.1818);">-</div>
<div class="t" style="left:1652.46px;top:963.28px;font-size:22.53px;font-weight:400;color:#111111;transform:scaleX(0.9630);">Yes</div>
<div class="t" style="left:1899.25px;top:963.28px;font-size:22.53px;font-weight:400;color:#111111;transform:scaleX(1.0000);">-</div>
<div class="t" style="left:2068.25px;top:963.28px;font-size:22.53px;font-weight:400;color:#111111;transform:scaleX(1.0000);">-</div>
<div class="t" style="left:2237.95px;top:963.28px;font-size:22.53px;font-weight:400;color:#111111;transform:scaleX(1.0000);">-</div>
<div class="t" style="left:2406.25px;top:963.28px;font-size:22.53px;font-weight:400;color:#111111;transform:scaleX(1.0000);">-</div>
<div class="t" style="left:2575.25px;top:963.28px;font-size:22.53px;font-weight:400;color:#111111;transform:scaleX(1.0000);">-</div>
<div class="t" style="left:2744.25px;top:963.28px;font-size:22.53px;font-weight:400;color:#111111;transform:scaleX(1.0000);">-</div>
<div class="t" style="left:140.02px;top:991.33px;font-size:22.53px;font-weight:400;color:#111111;transform:scaleX(1.1818);">-</div>
<div class="t" style="left:1652.46px;top:991.33px;font-size:22.53px;font-weight:400;color:#111111;transform:scaleX(0.9630);">Yes</div>
<div class="t" style="left:1899.25px;top:991.33px;font-size:22.53px;font-weight:400;color:#111111;transform:scaleX(1.0000);">-</div>
<div class="t" style="left:2068.25px;top:991.33px;font-size:22.53px;font-weight:400;color:#111111;transform:scaleX(1.0000);">-</div>
<div class="t" style="left:2237.95px;top:991.33px;font-size:22.53px;font-weight:400;color:#111111;transform:scaleX(1.0000);">-</div>
<div class="t" style="left:2406.25px;top:991.33px;font-size:22.53px;font-weight:400;color:#111111;transform:scaleX(1.0000);">-</div>
<div class="t" style="left:2575.25px;top:991.33px;font-size:22.53px;font-weight:400;color:#111111;transform:scaleX(1.0000);">-</div>
<div class="t" style="left:2744.25px;top:991.33px;font-size:22.53px;font-weight:400;color:#111111;transform:scaleX(1.0000);">-</div>
<div class="t" style="left:140.02px;top:1019.38px;font-size:22.53px;font-weight:400;color:#111111;transform:scaleX(1.1818);">-</div>
<div class="t" style="left:1652.46px;top:1019.38px;font-size:22.53px;font-weight:400;color:#111111;transform:scaleX(0.9630);">Yes</div>
<div class="t" style="left:1899.25px;top:1019.38px;font-size:22.53px;font-weight:400;color:#111111;transform:scaleX(1.0000);">-</div>
<div class="t" style="left:2068.25px;top:1019.38px;font-size:22.53px;font-weight:400;color:#111111;transform:scaleX(1.0000);">-</div>
<div class="t" style="left:2237.95px;top:1019.38px;font-size:22.53px;font-weight:400;color:#111111;transform:scaleX(1.0000);">-</div>
<div class="t" style="left:2406.25px;top:1019.38px;font-size:22.53px;font-weight:400;color:#111111;transform:scaleX(1.0000);">-</div>
<div class="t" style="left:2575.25px;top:1019.38px;font-size:22.53px;font-weight:400;color:#111111;transform:scaleX(1.0000);">-</div>
<div class="t" style="left:2744.25px;top:1019.38px;font-size:22.53px;font-weight:400;color:#111111;transform:scaleX(1.0000);">-</div>
<div class="t" style="left:140.02px;top:1047.43px;font-size:22.53px;font-weight:400;color:#111111;transform:scaleX(1.1818);">-</div>
<div class="t" style="left:1652.46px;top:1047.43px;font-size:22.53px;font-weight:400;color:#111111;transform:scaleX(0.9630);">Yes</div>
<div class="t" style="left:1899.25px;top:1047.43px;font-size:22.53px;font-weight:400;color:#111111;transform:scaleX(1.0000);">-</div>
<div class="t" style="left:2068.25px;top:1047.43px;font-size:22.53px;font-weight:400;color:#111111;transform:scaleX(1.0000);">-</div>
<div class="t" style="left:2237.95px;top:1047.43px;font-size:22.53px;font-weight:400;color:#111111;transform:scaleX(1.0000);">-</div>
<div class="t" style="left:2406.25px;top:1047.43px;font-size:22.53px;font-weight:400;color:#111111;transform:scaleX(1.0000);">-</div>
<div class="t" style="left:2575.25px;top:1047.43px;font-size:22.53px;font-weight:400;color:#111111;transform:scaleX(1.0000);">-</div>
<div class="t" style="left:2744.25px;top:1047.43px;font-size:22.53px;font-weight:400;color:#111111;transform:scaleX(1.0000);">-</div>
<div class="t" style="left:140.02px;top:1075.48px;font-size:22.53px;font-weight:400;color:#111111;transform:scaleX(1.1818);">-</div>
<div class="t" style="left:1652.46px;top:1075.48px;font-size:22.53px;font-weight:400;color:#111111;transform:scaleX(0.9630);">Yes</div>
<div class="t" style="left:1899.25px;top:1075.48px;font-size:22.53px;font-weight:400;color:#111111;transform:scaleX(1.0000);">-</div>
<div class="t" style="left:2068.25px;top:1075.48px;font-size:22.53px;font-weight:400;color:#111111;transform:scaleX(1.0000);">-</div>
<div class="t" style="left:2237.95px;top:1075.48px;font-size:22.53px;font-weight:400;color:#111111;transform:scaleX(1.0000);">-</div>
<div class="t" style="left:2406.25px;top:1075.48px;font-size:22.53px;font-weight:400;color:#111111;transform:scaleX(1.0000);">-</div>
<div class="t" style="left:2575.25px;top:1075.48px;font-size:22.53px;font-weight:400;color:#111111;transform:scaleX(1.0000);">-</div>
<div class="t" style="left:2744.25px;top:1075.48px;font-size:22.53px;font-weight:400;color:#111111;transform:scaleX(1.0000);">-</div>
<div class="t" style="left:140.02px;top:1103.53px;font-size:22.53px;font-weight:400;color:#111111;transform:scaleX(1.1818);">-</div>
<div class="t" style="left:1652.46px;top:1103.53px;font-size:22.53px;font-weight:400;color:#111111;transform:scaleX(0.9630);">Yes</div>
<div class="t" style="left:1899.25px;top:1103.53px;font-size:22.53px;font-weight:400;color:#111111;transform:scaleX(1.0000);">-</div>
<div class="t" style="left:2068.25px;top:1103.53px;font-size:22.53px;font-weight:400;color:#111111;transform:scaleX(1.0000);">-</div>
<div class="t" style="left:2237.95px;top:1103.53px;font-size:22.53px;font-weight:400;color:#111111;transform:scaleX(1.0000);">-</div>
<div class="t" style="left:2406.25px;top:1103.53px;font-size:22.53px;font-weight:400;color:#111111;transform:scaleX(1.0000);">-</div>
<div class="t" style="left:2575.25px;top:1103.53px;font-size:22.53px;font-weight:400;color:#111111;transform:scaleX(1.0000);">-</div>
<div class="t" style="left:2744.25px;top:1103.53px;font-size:22.53px;font-weight:400;color:#111111;transform:scaleX(1.0000);">-</div>
<div class="t" style="left:140.02px;top:1131.58px;font-size:22.53px;font-weight:400;color:#111111;transform:scaleX(1.1818);">-</div>
<div class="t" style="left:1652.46px;top:1131.58px;font-size:22.53px;font-weight:400;color:#111111;transform:scaleX(0.9630);">Yes</div>
<div class="t" style="left:1899.25px;top:1131.58px;font-size:22.53px;font-weight:400;color:#111111;transform:scaleX(1.0000);">-</div>
<div class="t" style="left:2068.25px;top:1131.58px;font-size:22.53px;font-weight:400;color:#111111;transform:scaleX(1.0000);">-</div>
<div class="t" style="left:2237.95px;top:1131.58px;font-size:22.53px;font-weight:400;color:#111111;transform:scaleX(1.0000);">-</div>
<div class="t" style="left:2406.25px;top:1131.58px;font-size:22.53px;font-weight:400;color:#111111;transform:scaleX(1.0000);">-</div>
<div class="t" style="left:2575.25px;top:1131.58px;font-size:22.53px;font-weight:400;color:#111111;transform:scaleX(1.0000);">-</div>
<div class="t" style="left:2744.25px;top:1131.58px;font-size:22.53px;font-weight:400;color:#111111;transform:scaleX(1.0000);">-</div>
<div class="t" style="left:140.02px;top:1159.63px;font-size:22.53px;font-weight:400;color:#111111;transform:scaleX(1.1818);">-</div>
<div class="t" style="left:1652.46px;top:1159.63px;font-size:22.53px;font-weight:400;color:#111111;transform:scaleX(0.9630);">Yes</div>
<div class="t" style="left:1899.25px;top:1159.63px;font-size:22.53px;font-weight:400;color:#111111;transform:scaleX(1.0000);">-</div>
<div class="t" style="left:2068.25px;top:1159.63px;font-size:22.53px;font-weight:400;color:#111111;transform:scaleX(1.0000);">-</div>
<div class="t" style="left:2237.95px;top:1159.63px;font-size:22.53px;font-weight:400;color:#111111;transform:scaleX(1.0000);">-</div>
<div class="t" style="left:2406.25px;top:1159.63px;font-size:22.53px;font-weight:400;color:#111111;transform:scaleX(1.0000);">-</div>
<div class="t" style="left:2575.25px;top:1159.63px;font-size:22.53px;font-weight:400;color:#111111;transform:scaleX(1.0000);">-</div>
<div class="t" style="left:2744.25px;top:1159.63px;font-size:22.53px;font-weight:400;color:#111111;transform:scaleX(1.0000);">-</div>
<div class="t" style="left:140.02px;top:1187.68px;font-size:22.53px;font-weight:400;color:#111111;transform:scaleX(1.1818);">-</div>
<div class="t" style="left:1652.46px;top:1187.68px;font-size:22.53px;font-weight:400;color:#111111;transform:scaleX(0.9630);">Yes</div>
<div class="t" style="left:1899.25px;top:1187.68px;font-size:22.53px;font-weight:400;color:#111111;transform:scaleX(1.0000);">-</div>
<div class="t" style="left:2068.25px;top:1187.68px;font-size:22.53px;font-weight:400;color:#111111;transform:scaleX(1.0000);">-</div>
<div class="t" style="left:2237.95px;top:1187.68px;font-size:22.53px;font-weight:400;color:#111111;transform:scaleX(1.0000);">-</div>
<div class="t" style="left:2406.25px;top:1187.68px;font-size:22.53px;font-weight:400;color:#111111;transform:scaleX(1.0000);">-</div>
<div class="t" style="left:2575.25px;top:1187.68px;font-size:22.53px;font-weight:400;color:#111111;transform:scaleX(1.0000);">-</div>
<div class="t" style="left:2744.25px;top:1187.68px;font-size:22.53px;font-weight:400;color:#111111;transform:scaleX(1.0000);">-</div>
<div class="r" style="left:137.00px;top:1211.94px;width:2723.40px;height:35.76px;background:#4cb1e7;"></div>
<div class="t" style="left:144.17px;top:1215.53px;font-size:28.20px;font-weight:700;color:#fff;transform:scaleX(1.0578);-webkit-text-stroke:0.5px #fff;">Total</div>
<div class="t" style="left:1461.33px;top:1218.90px;font-size:22.21px;font-weight:700;color:#fff;transform:scaleX(1.1325);-webkit-text-stroke:0.5px #fff;">240,000</div>
<div class="t" style="left:1852.02px;top:1218.90px;font-size:22.21px;font-weight:700;color:#fff;transform:scaleX(1.1200);-webkit-text-stroke:0.5px #fff;">34,667</div>
<div class="t" style="left:2020.95px;top:1218.90px;font-size:22.21px;font-weight:700;color:#fff;transform:scaleX(1.1200);-webkit-text-stroke:0.5px #fff;">68,000</div>
<div class="t" style="left:2190.65px;top:1218.90px;font-size:22.21px;font-weight:700;color:#fff;transform:scaleX(1.1200);-webkit-text-stroke:0.5px #fff;">68,000</div>
<div class="t" style="left:2358.83px;top:1218.90px;font-size:22.21px;font-weight:700;color:#fff;transform:scaleX(1.1200);-webkit-text-stroke:0.5px #fff;">45,333</div>
<div class="t" style="left:2527.95px;top:1218.90px;font-size:22.21px;font-weight:700;color:#fff;transform:scaleX(1.1200);-webkit-text-stroke:0.5px #fff;">12,000</div>
<div class="t" style="left:2696.95px;top:1218.90px;font-size:22.21px;font-weight:700;color:#fff;transform:scaleX(1.1200);-webkit-text-stroke:0.5px #fff;">12,000</div>
<div class="t" style="left:93.92px;top:1306.00px;font-size:40.99px;font-weight:700;color:#222222;transform:scaleX(0.9998);-webkit-text-stroke:0.5px #222222;">Startup Costs Depreciation, $</div>
<div class="r" style="left:137.00px;top:1373.40px;width:2723.40px;height:28.00px;background:#4cb1e7;"></div>
<div class="t" style="left:141.25px;top:1377.04px;font-size:21.80px;font-weight:700;color:#fff;transform:scaleX(1.0584);-webkit-text-stroke:0.5px #fff;">Opening Net Book Value</div>
<div class="t" style="left:1891.77px;top:1376.43px;font-size:22.53px;font-weight:700;color:#fff;transform:scaleX(1.0500);-webkit-text-stroke:0.5px #fff;">-</div>
<div class="t" style="left:2020.69px;top:1376.70px;font-size:22.21px;font-weight:700;color:#fff;transform:scaleX(1.1200);-webkit-text-stroke:0.5px #fff;">34,378</div>
<div class="t" style="left:2176.79px;top:1376.70px;font-size:22.21px;font-weight:700;color:#fff;transform:scaleX(1.1200);-webkit-text-stroke:0.5px #fff;">101,522</div>
<div class="t" style="left:2345.12px;top:1376.70px;font-size:22.21px;font-weight:700;color:#fff;transform:scaleX(1.1200);-webkit-text-stroke:0.5px #fff;">168,100</div>
<div class="t" style="left:2514.00px;top:1376.70px;font-size:22.21px;font-weight:700;color:#fff;transform:scaleX(1.1200);-webkit-text-stroke:0.5px #fff;">211,633</div>
<div class="t" style="left:2683.00px;top:1376.70px;font-size:22.21px;font-weight:700;color:#fff;transform:scaleX(1.1200);-webkit-text-stroke:0.5px #fff;">221,733</div>
<div class="t" style="left:160.50px;top:1404.93px;font-size:22.53px;font-weight:400;color:#000;transform:scaleX(0.9752);">Expenditure - Amortizable</div>
<div class="t" style="left:1730.15px;top:1404.93px;font-size:22.53px;font-weight:400;color:#000;transform:scaleX(1.0000);">-</div>
<div class="t" style="left:1864.13px;top:1405.20px;font-size:22.21px;font-weight:400;color:#000;transform:scaleX(0.9860);">34,667</div>
<div class="t" style="left:2032.89px;top:1405.20px;font-size:22.21px;font-weight:400;color:#000;transform:scaleX(0.9860);">68,000</div>
<div class="t" style="left:2202.59px;top:1405.20px;font-size:22.21px;font-weight:400;color:#000;transform:scaleX(0.9860);">68,000</div>
<div class="t" style="left:2370.99px;top:1405.20px;font-size:22.21px;font-weight:400;color:#000;transform:scaleX(0.9860);">45,333</div>
<div class="t" style="left:2539.89px;top:1405.20px;font-size:22.21px;font-weight:400;color:#000;transform:scaleX(0.9860);">12,000</div>
<div class="t" style="left:2708.89px;top:1405.20px;font-size:22.21px;font-weight:400;color:#000;transform:scaleX(0.9860);">12,000</div>
<div class="t" style="left:160.49px;top:1432.63px;font-size:22.53px;font-weight:400;color:#000;transform:scaleX(0.9791);">Depreciation (Depreciation Period (Years) - 10)</div>
<div class="t" style="left:1894.51px;top:1432.90px;font-size:22.21px;font-weight:400;color:#000;transform:scaleX(0.9860);">289</div>
<div class="t" style="left:2063.43px;top:1432.90px;font-size:22.21px;font-weight:400;color:#000;transform:scaleX(0.9860);">856</div>
<div class="t" style="left:2215.01px;top:1432.90px;font-size:22.21px;font-weight:400;color:#000;transform:scaleX(0.9860);">1,422</div>
<div class="t" style="left:2383.06px;top:1432.90px;font-size:22.21px;font-weight:400;color:#000;transform:scaleX(0.9860);">1,800</div>
<div class="t" style="left:2552.06px;top:1432.90px;font-size:22.21px;font-weight:400;color:#000;transform:scaleX(0.9860);">1,900</div>
<div class="t" style="left:2721.06px;top:1432.90px;font-size:22.21px;font-weight:400;color:#000;transform:scaleX(0.9860);">2,000</div>
<div class="r" style="left:137.00px;top:1457.50px;width:2723.40px;height:28.00px;background:#4cb1e7;"></div>
<div class="t" style="left:141.26px;top:1461.14px;font-size:21.80px;font-weight:700;color:#fff;transform:scaleX(1.0496);-webkit-text-stroke:0.5px #fff;">Closing Net Book Value</div>
<div class="t" style="left:1723.86px;top:1460.53px;font-size:22.53px;font-weight:700;color:#fff;transform:scaleX(1.0000);-webkit-text-stroke:0.5px #fff;">-</div>
<div class="t" style="left:1851.69px;top:1460.80px;font-size:22.21px;font-weight:700;color:#fff;transform:scaleX(1.1200);-webkit-text-stroke:0.5px #fff;">34,378</div>
<div class="t" style="left:2007.09px;top:1460.80px;font-size:22.21px;font-weight:700;color:#fff;transform:scaleX(1.1200);-webkit-text-stroke:0.5px #fff;">101,522</div>
<div class="t" style="left:2176.82px;top:1460.80px;font-size:22.21px;font-weight:700;color:#fff;transform:scaleX(1.1200);-webkit-text-stroke:0.5px #fff;">168,100</div>
<div class="t" style="left:2345.00px;top:1460.80px;font-size:22.21px;font-weight:700;color:#fff;transform:scaleX(1.1200);-webkit-text-stroke:0.5px #fff;">211,633</div>
<div class="t" style="left:2514.00px;top:1460.80px;font-size:22.21px;font-weight:700;color:#fff;transform:scaleX(1.1200);-webkit-text-stroke:0.5px #fff;">221,733</div>
<div class="t" style="left:2683.00px;top:1460.80px;font-size:22.21px;font-weight:700;color:#fff;transform:scaleX(1.1200);-webkit-text-stroke:0.5px #fff;">231,733</div>
<div class="r" style="left:137.00px;top:1527.50px;width:2723.40px;height:27.80px;background:#4cb1e7;"></div>
<div class="t" style="left:141.25px;top:1530.94px;font-size:21.80px;font-weight:700;color:#fff;transform:scaleX(1.0584);-webkit-text-stroke:0.5px #fff;">Opening Net Book Value</div>
<div class="t" style="left:1891.77px;top:1530.33px;font-size:22.53px;font-weight:700;color:#fff;transform:scaleX(1.0500);-webkit-text-stroke:0.5px #fff;">-</div>
<div class="t" style="left:2060.77px;top:1530.33px;font-size:22.53px;font-weight:700;color:#fff;transform:scaleX(1.0500);-webkit-text-stroke:0.5px #fff;">-</div>
<div class="t" style="left:2230.47px;top:1530.33px;font-size:22.53px;font-weight:700;color:#fff;transform:scaleX(1.0500);-webkit-text-stroke:0.5px #fff;">-</div>
<div class="t" style="left:2398.77px;top:1530.33px;font-size:22.53px;font-weight:700;color:#fff;transform:scaleX(1.0500);-webkit-text-stroke:0.5px #fff;">-</div>
<div class="t" style="left:2567.77px;top:1530.33px;font-size:22.53px;font-weight:700;color:#fff;transform:scaleX(1.0500);-webkit-text-stroke:0.5px #fff;">-</div>
<div class="t" style="left:2736.77px;top:1530.33px;font-size:22.53px;font-weight:700;color:#fff;transform:scaleX(1.0500);-webkit-text-stroke:0.5px #fff;">-</div>
<div class="t" style="left:160.50px;top:1558.73px;font-size:22.53px;font-weight:400;color:#000;transform:scaleX(0.9753);">Expenditure - Non-Amortizable</div>
<div class="t" style="left:1899.25px;top:1558.73px;font-size:22.53px;font-weight:400;color:#000;transform:scaleX(1.0000);">-</div>
<div class="t" style="left:2068.25px;top:1558.73px;font-size:22.53px;font-weight:400;color:#000;transform:scaleX(1.0000);">-</div>
<div class="t" style="left:2237.95px;top:1558.73px;font-size:22.53px;font-weight:400;color:#000;transform:scaleX(1.0000);">-</div>
<div class="t" style="left:2406.25px;top:1558.73px;font-size:22.53px;font-weight:400;color:#000;transform:scaleX(1.0000);">-</div>
<div class="t" style="left:2575.25px;top:1558.73px;font-size:22.53px;font-weight:400;color:#000;transform:scaleX(1.0000);">-</div>
<div class="t" style="left:2744.25px;top:1558.73px;font-size:22.53px;font-weight:400;color:#000;transform:scaleX(1.0000);">-</div>
<div class="r" style="left:137.00px;top:1583.60px;width:2723.40px;height:27.80px;background:#4cb1e7;"></div>
<div class="t" style="left:141.26px;top:1587.04px;font-size:21.80px;font-weight:700;color:#fff;transform:scaleX(1.0496);-webkit-text-stroke:0.5px #fff;">Closing Net Book Value</div>
<div class="t" style="left:1891.77px;top:1586.43px;font-size:22.53px;font-weight:700;color:#fff;transform:scaleX(1.0500);-webkit-text-stroke:0.5px #fff;">-</div>
<div class="t" style="left:2060.77px;top:1586.43px;font-size:22.53px;font-weight:700;color:#fff;transform:scaleX(1.0500);-webkit-text-stroke:0.5px #fff;">-</div>
<div class="t" style="left:2230.47px;top:1586.43px;font-size:22.53px;font-weight:700;color:#fff;transform:scaleX(1.0500);-webkit-text-stroke:0.5px #fff;">-</div>
<div class="t" style="left:2398.77px;top:1586.43px;font-size:22.53px;font-weight:700;color:#fff;transform:scaleX(1.0500);-webkit-text-stroke:0.5px #fff;">-</div>
<div class="t" style="left:2567.77px;top:1586.43px;font-size:22.53px;font-weight:700;color:#fff;transform:scaleX(1.0500);-webkit-text-stroke:0.5px #fff;">-</div>
<div class="t" style="left:2736.77px;top:1586.43px;font-size:22.53px;font-weight:700;color:#fff;transform:scaleX(1.0500);-webkit-text-stroke:0.5px #fff;">-</div>
<div class="t" style="left:2857.16px;top:1376.70px;font-size:22.21px;font-weight:700;color:#fff;transform:scaleX(1.1200);clip-path:inset(0 0 0 0)-webkit-text-stroke:0.5px #fff;">2</div>
<div class="t" style="left:2857.16px;top:1460.80px;font-size:22.21px;font-weight:700;color:#fff;transform:scaleX(1.1200);clip-path:inset(0 0 0 0)-webkit-text-stroke:0.5px #fff;">2</div>
<div class="r" style="left:53.00px;top:514.20px;width:2807.40px;height:1.00px;background:#9a9a9a;"></div>
<div class="r" style="left:1772.90px;top:278.00px;width:1.00px;height:1391.80px;background:#9a9a9a;"></div>
<div class="r" style="left:2860.40px;top:278.00px;width:30.10px;height:1391.80px;background:#0a0a0a;"></div>
<div class="t" style="left:94.75px;top:39.07px;font-size:17.88px;font-weight:400;color:#ffffff;transform:scaleX(0.9815);">agricultural-consultancy.xlsx</div>
<div class="t" style="left:323.53px;top:39.07px;font-size:17.88px;font-weight:400;color:#ffffff;transform:scaleX(1.0997);">-</div>
<div class="t" style="left:339.86px;top:39.07px;font-size:17.88px;font-weight:400;color:#ffffff;transform:scaleX(0.9815);">Read-Only</div>
<div class="r" style="left:2621.20px;top:87.10px;width:134.70px;height:35.90px;background:#262626;border:1px solid #6b6b6b;border-radius:6px;box-sizing:border-box"></div>
<div class="t" style="left:2652.01px;top:95.92px;font-size:20.06px;font-weight:400;color:#ffffff;transform:scaleX(0.9756);">Comments</div>
<div class="r" style="left:2768.00px;top:87.10px;width:104.80px;height:35.90px;background:#3aa75c;border-radius:7px"></div>
<div class="t" style="left:2799.16px;top:95.92px;font-size:20.06px;font-weight:400;color:#0a0a0a;transform:scaleX(0.9222);">Share</div>
<div class="t" style="left:40.87px;top:96.77px;font-size:20.35px;font-weight:400;color:#ffffff;transform:scaleX(0.9763);">File</div>
<div class="t" style="left:110.02px;top:96.77px;font-size:20.35px;font-weight:700;color:#ffffff;transform:scaleX(1.0132);">Home</div>
<div class="t" style="left:196.47px;top:96.77px;font-size:20.35px;font-weight:400;color:#ffffff;transform:scaleX(0.9741);">Insert</div>
<div class="t" style="left:275.35px;top:96.77px;font-size:20.35px;font-weight:400;color:#ffffff;transform:scaleX(0.9899);">Draw</div>
<div class="t" style="left:352.04px;top:96.77px;font-size:20.35px;font-weight:400;color:#ffffff;transform:scaleX(0.9355);">Page Layout</div>
<div class="t" style="left:489.68px;top:96.77px;font-size:20.35px;font-weight:400;color:#ffffff;transform:scaleX(0.9697);">Formulas</div>
<div class="t" style="left:599.20px;top:96.77px;font-size:20.35px;font-weight:400;color:#ffffff;transform:scaleX(0.9609);">Data</div>
<div class="t" style="left:670.07px;top:96.77px;font-size:20.35px;font-weight:400;color:#ffffff;transform:scaleX(0.9155);">Review</div>
<div class="t" style="left:762.52px;top:96.77px;font-size:20.35px;font-weight:400;color:#ffffff;transform:scaleX(0.9191);">View</div>
<div class="t" style="left:834.16px;top:96.77px;font-size:20.35px;font-weight:400;color:#ffffff;transform:scaleX(1.0075);">Automate</div>
<div class="t" style="left:949.30px;top:96.77px;font-size:20.35px;font-weight:400;color:#ffffff;transform:scaleX(1.0197);">Help</div>
<div class="r" style="left:111.00px;top:119.80px;width:58.00px;height:3.20px;background:#5fbf8d;border-radius:2px"></div>
<div class="r" style="left:23.00px;top:128.00px;width:2856.00px;height:150.00px;background:#292929;border-radius:11px"></div>
<div class="r" style="left:282.10px;top:135.00px;width:1.00px;height:133.50px;background:#444444;"></div>
<div class="r" style="left:633.10px;top:135.00px;width:1.00px;height:133.50px;background:#444444;"></div>
<div class="r" style="left:1083.00px;top:135.00px;width:1.00px;height:133.50px;background:#444444;"></div>
<div class="r" style="left:1325.50px;top:135.00px;width:1.00px;height:133.50px;background:#444444;"></div>
<div class="r" style="left:1544.00px;top:135.00px;width:1.00px;height:133.50px;background:#444444;"></div>
<div class="r" style="left:1867.80px;top:135.00px;width:1.00px;height:133.50px;background:#444444;"></div>
<div class="r" style="left:1962.90px;top:135.00px;width:1.00px;height:133.50px;background:#444444;"></div>
<div class="r" style="left:2056.00px;top:135.00px;width:1.00px;height:133.50px;background:#444444;"></div>
<div class="t" style="left:50.44px;top:195.04px;font-size:17.44px;font-weight:400;color:#ffffff;transform:scaleX(0.9482);">Paste</div>
<div class="t" style="left:141.09px;top:144.56px;font-size:17.30px;font-weight:400;color:#ffffff;transform:scaleX(1.0382);">Cut</div>
<div class="t" style="left:141.07px;top:183.04px;font-size:17.44px;font-weight:400;color:#ffffff;transform:scaleX(1.0453);">Copy</div>
<div class="t" style="left:140.55px;top:222.24px;font-size:17.44px;font-weight:400;color:#ffffff;transform:scaleX(1.0165);">Format Painter</div>
<div class="t" style="left:108.17px;top:253.80px;font-size:16.42px;font-weight:400;color:#ffffff;transform:scaleX(0.9911);">Clipboard</div>
<div class="r" style="left:295.00px;top:146.20px;width:180.50px;height:35.50px;background:transparent;border:1.3px solid #6e6e6e;border-radius:5px;box-sizing:border-box"></div>
<div class="t" style="left:297.91px;top:154.77px;font-size:19.77px;font-weight:400;color:#ffffff;transform:scaleX(0.8811);">Tahoma</div>
<div class="r" style="left:479.00px;top:146.20px;width:64.70px;height:35.50px;background:transparent;border:1.3px solid #6e6e6e;border-radius:5px;box-sizing:border-box"></div>
<div class="t" style="left:481.60px;top:155.01px;font-size:19.48px;font-weight:400;color:#ffffff;transform:scaleX(0.9406);">8</div>
<div class="t" style="left:553.95px;top:148.45px;font-size:27.47px;font-weight:400;color:#d6d6d6;transform:scaleX(0.9223);">A</div>
<div class="t" style="left:596.26px;top:154.60px;font-size:20.20px;font-weight:400;color:#d6d6d6;transform:scaleX(0.9331);">A</div>
<div class="t" style="left:306.57px;top:199.84px;font-size:21.22px;font-weight:700;color:#d6d6d6;transform:scaleX(0.8654);">B</div>
<div class="t" style="left:381.11px;top:199.95px;font-size:20.49px;font-weight:400;color:#d6d6d6;transform:scaleX(1.1944);">U</div>
<div class="r" style="left:383.00px;top:219.20px;width:14.00px;height:1.60px;background:#d6d6d6;"></div>
<div class="r" style="left:433.90px;top:193.70px;width:1.00px;height:35.80px;background:#4a4a4a;"></div>
<div class="r" style="left:444.00px;top:221.00px;width:23.00px;height:2.00px;background:#e6e6e6;"></div>
<div class="r" style="left:499.00px;top:193.70px;width:1.00px;height:35.80px;background:#4a4a4a;"></div>
<div class="r" style="left:508.80px;top:217.80px;width:24.70px;height:6.20px;background:#ffff00;"></div>
<div class="t" style="left:573.45px;top:196.87px;font-size:23.55px;font-weight:400;color:#d6d6d6;transform:scaleX(1.0888);">A</div>
<div class="r" style="left:570.00px;top:217.80px;width:24.00px;height:6.20px;background:#ff0000;"></div>
<div class="t" style="left:429.18px;top:254.67px;font-size:15.99px;font-weight:400;color:#ffffff;transform:scaleX(1.0045);">Font</div>
<div class="r" style="left:653.00px;top:152.00px;width:22.00px;height:2.00px;background:#d6d6d6;"></div>
<div class="r" style="left:661.00px;top:158.00px;width:10.00px;height:2.00px;background:#d6d6d6;"></div>
<div class="r" style="left:653.00px;top:164.00px;width:22.00px;height:2.00px;background:#d6d6d6;"></div>
<div class="r" style="left:685.40px;top:146.50px;width:35.50px;height:34.90px;background:#3b3b3b;border:1.2px solid #7a7a7a;border-radius:5px;box-sizing:border-box"></div>
<div class="r" style="left:692.00px;top:156.00px;width:22.00px;height:2.00px;background:#d6d6d6;"></div>
<div class="r" style="left:696.00px;top:162.00px;width:14.00px;height:2.00px;background:#d6d6d6;"></div>
<div class="r" style="left:692.00px;top:168.00px;width:22.00px;height:2.00px;background:#d6d6d6;"></div>
<div class="r" style="left:731.00px;top:162.00px;width:22.00px;height:2.00px;background:#d6d6d6;"></div>
<div class="r" style="left:735.00px;top:168.00px;width:14.00px;height:2.00px;background:#d6d6d6;"></div>
<div class="r" style="left:731.00px;top:174.00px;width:22.00px;height:2.00px;background:#d6d6d6;"></div>
<div class="r" style="left:763.00px;top:146.50px;width:1.00px;height:35.50px;background:#4a4a4a;"></div>
<div class="t" style="left:766.63px;top:161.12px;font-size:18.17px;font-weight:400;color:#d6d6d6;transform:scaleX(1.1245);transform-origin:0 0;rotate:-45deg">ab</div>
<div class="r" style="left:851.10px;top:143.70px;width:1.00px;height:94.30px;background:#4a4a4a;"></div>
<div class="t" style="left:870.40px;top:150.53px;font-size:14.97px;font-weight:400;color:#d6d6d6;transform:scaleX(1.0983);">ab</div>
<div class="t" style="left:870.11px;top:160.45px;font-size:16.72px;font-weight:400;color:#d6d6d6;transform:scaleX(0.9713);">c</div>
<div class="t" style="left:897.23px;top:155.81px;font-size:17.59px;font-weight:400;color:#ffffff;transform:scaleX(0.9641);">Wrap Text</div>
<div class="r" style="left:653.00px;top:200.00px;width:22.00px;height:2.00px;background:#d6d6d6;"></div>
<div class="r" style="left:653.00px;top:207.00px;width:17.00px;height:2.00px;background:#d6d6d6;"></div>
<div class="r" style="left:653.00px;top:213.00px;width:22.00px;height:2.00px;background:#d6d6d6;"></div>
<div class="r" style="left:653.00px;top:219.00px;width:17.00px;height:2.00px;background:#d6d6d6;"></div>
<div class="r" style="left:692.00px;top:200.00px;width:22.00px;height:2.00px;background:#d6d6d6;"></div>
<div class="r" style="left:696.00px;top:207.00px;width:15.00px;height:2.00px;background:#d6d6d6;"></div>
<div class="r" style="left:692.00px;top:213.00px;width:22.00px;height:2.00px;background:#d6d6d6;"></div>
<div class="r" style="left:696.00px;top:219.00px;width:15.00px;height:2.00px;background:#d6d6d6;"></div>
<div class="r" style="left:731.00px;top:200.00px;width:22.00px;height:2.00px;background:#d6d6d6;"></div>
<div class="r" style="left:736.00px;top:207.00px;width:17.00px;height:2.00px;background:#d6d6d6;"></div>
<div class="r" style="left:731.00px;top:213.00px;width:22.00px;height:2.00px;background:#d6d6d6;"></div>
<div class="r" style="left:736.00px;top:219.00px;width:17.00px;height:2.00px;background:#d6d6d6;"></div>
<div class="r" style="left:763.00px;top:194.00px;width:1.00px;height:36.50px;background:#4a4a4a;"></div>
<div class="r" style="left:774.00px;top:200.00px;width:22.00px;height:2.00px;background:#d6d6d6;"></div>
<div class="r" style="left:787.00px;top:207.00px;width:9.00px;height:2.00px;background:#d6d6d6;"></div>
<div class="r" style="left:787.00px;top:213.00px;width:9.00px;height:2.00px;background:#d6d6d6;"></div>
<div class="r" style="left:774.00px;top:219.00px;width:22.00px;height:2.00px;background:#d6d6d6;"></div>
<div class="r" style="left:813.00px;top:200.00px;width:22.00px;height:2.00px;background:#d6d6d6;"></div>
<div class="r" style="left:826.00px;top:207.00px;width:9.00px;height:2.00px;background:#d6d6d6;"></div>
<div class="r" style="left:826.00px;top:213.00px;width:9.00px;height:2.00px;background:#d6d6d6;"></div>
<div class="r" style="left:813.00px;top:219.00px;width:22.00px;height:2.00px;background:#d6d6d6;"></div>
<div class="t" style="left:895.82px;top:203.41px;font-size:17.59px;font-weight:400;color:#ffffff;transform:scaleX(1.0269);">Merge &amp; Center</div>
<div class="t" style="left:809.97px;top:254.02px;font-size:16.28px;font-weight:400;color:#ffffff;transform:scaleX(0.9967);">Alignment</div>
<div class="r" style="left:1096.60px;top:146.00px;width:217.20px;height:35.50px;background:transparent;border:1.3px solid #6e6e6e;border-radius:5px;box-sizing:border-box"></div>
<div class="t" style="left:1098.64px;top:154.96px;font-size:19.19px;font-weight:400;color:#ffffff;transform:scaleX(0.8863);">General</div>
<div class="t" style="left:1106.76px;top:199.49px;font-size:23.64px;font-weight:400;color:#d6d6d6;transform:scaleX(0.9591);">$</div>
<div class="t" style="left:1162.42px;top:197.17px;font-size:29.80px;font-weight:400;color:#d6d6d6;transform:scaleX(0.9273);">%</div>
<div class="r" style="left:1235.00px;top:194.00px;width:1.00px;height:36.00px;background:#4a4a4a;"></div>
<div class="t" style="left:1258.81px;top:198.77px;font-size:15.04px;font-weight:400;color:#d6d6d6;transform:scaleX(1.1820);">0</div>
<div class="t" style="left:1249.23px;top:210.07px;font-size:15.04px;font-weight:400;color:#d6d6d6;transform:scaleX(0.9235);">.00</div>
<div class="t" style="left:1286.09px;top:198.77px;font-size:15.04px;font-weight:400;color:#d6d6d6;transform:scaleX(1.0290);">.00</div>
<div class="t" style="left:1296.27px;top:210.07px;font-size:15.04px;font-weight:400;color:#d6d6d6;transform:scaleX(0.8975);">.0</div>
<div class="t" style="left:1162.05px;top:254.30px;font-size:16.42px;font-weight:400;color:#ffffff;transform:scaleX(1.0018);">Number</div>
<div class="t" style="left:1346.24px;top:194.44px;font-size:18.02px;font-weight:400;color:#ffffff;transform:scaleX(0.9958);">Insert</div>
<div class="t" style="left:1408.66px;top:194.44px;font-size:18.02px;font-weight:400;color:#ffffff;transform:scaleX(0.9755);">Delete</div>
<div class="t" style="left:1471.71px;top:192.44px;font-size:18.02px;font-weight:400;color:#ffffff;transform:scaleX(1.0060);">Format</div>
<div class="t" style="left:1417.24px;top:255.79px;font-size:15.84px;font-weight:400;color:#ffffff;transform:scaleX(0.9457);">Cells</div>
<div class="t" style="left:1593.26px;top:143.37px;font-size:18.46px;font-weight:400;color:#ffffff;transform:scaleX(0.9829);">AutoSum</div>
<div class="t" style="left:1592.27px;top:181.56px;font-size:19.19px;font-weight:400;color:#ffffff;transform:scaleX(0.9099);">Fill</div>
<div class="t" style="left:1592.45px;top:220.81px;font-size:18.90px;font-weight:400;color:#ffffff;transform:scaleX(0.8820);">Clear</div>
<div class="t" style="left:1729.76px;top:137.85px;font-size:26.16px;font-weight:400;color:#4ba3e3;transform:scaleX(0.8762);">A</div>
<div class="t" style="left:1729.75px;top:160.07px;font-size:25.44px;font-weight:400;color:#d6d6d6;transform:scaleX(0.9329);">Z</div>
<div class="t" style="left:1724.95px;top:192.79px;font-size:17.73px;font-weight:400;color:#ffffff;transform:scaleX(1.0562);">Sort &amp;</div>
<div class="t" style="left:1723.24px;top:216.99px;font-size:17.73px;font-weight:400;color:#ffffff;transform:scaleX(1.0012);">Filter</div>
<div class="t" style="left:1793.75px;top:192.79px;font-size:17.73px;font-weight:400;color:#ffffff;transform:scaleX(1.0643);">Find &amp;</div>
<div class="t" style="left:1789.74px;top:216.99px;font-size:17.73px;font-weight:400;color:#ffffff;transform:scaleX(0.9390);">Select</div>
<div class="t" style="left:1681.05px;top:255.09px;font-size:15.84px;font-weight:400;color:#ffffff;transform:scaleX(1.0364);">Editing</div>
<div class="t" style="left:1884.96px;top:192.79px;font-size:17.73px;font-weight:400;color:#ffffff;transform:scaleX(1.0463);">Add-ins</div>
<div class="t" style="left:1888.47px;top:255.09px;font-size:15.84px;font-weight:400;color:#ffffff;transform:scaleX(0.9884);">Add-ins</div>
<div class="r" style="left:1989.60px;top:141.60px;width:40.80px;height:5.20px;background:#8a8a8a;"></div>
<div class="t" style="left:1979.97px;top:192.79px;font-size:17.73px;font-weight:400;color:#ffffff;transform:scaleX(0.9765);">Analyze</div>
<div class="t" style="left:1991.05px;top:216.99px;font-size:17.73px;font-weight:400;color:#ffffff;transform:scaleX(0.9944);">Data</div>
<div class="t" style="left:2292.97px;top:154.73px;font-size:50.29px;font-weight:700;color:#ffffff;transform:scaleX(0.8427);-webkit-text-stroke:1.3px #fff">F</div>
<div class="t" style="left:2317.82px;top:154.73px;font-size:50.29px;font-weight:700;color:#ffffff;transform:scaleX(1.0629);-webkit-text-stroke:1.3px #fff">I</div>
<div class="t" style="left:2332.20px;top:154.73px;font-size:50.29px;font-weight:700;color:#ffffff;transform:scaleX(1.0113);-webkit-text-stroke:1.3px #fff">N</div>
<div class="t" style="left:2367.74px;top:154.73px;font-size:50.29px;font-weight:700;color:#ffffff;transform:scaleX(1.0892);-webkit-text-stroke:1.3px #fff">M</div>
<div class="t" style="left:2449.87px;top:154.73px;font-size:50.29px;font-weight:700;color:#ffffff;transform:scaleX(0.9889);-webkit-text-stroke:1.3px #fff">D</div>
<div class="t" style="left:2486.12px;top:154.73px;font-size:50.29px;font-weight:700;color:#ffffff;transform:scaleX(0.7088);-webkit-text-stroke:1.3px #fff">E</div>
<div class="t" style="left:2512.00px;top:154.73px;font-size:50.29px;font-weight:700;color:#ffffff;transform:scaleX(0.6994);-webkit-text-stroke:1.3px #fff">L</div>
<div class="t" style="left:2534.09px;top:154.73px;font-size:50.29px;font-weight:700;color:#ffffff;transform:scaleX(0.8364);-webkit-text-stroke:1.3px #fff">S</div>
<div class="t" style="left:2563.30px;top:154.73px;font-size:50.29px;font-weight:700;color:#ffffff;transform:scaleX(0.7129);-webkit-text-stroke:1.3px #fff">L</div>
<div class="t" style="left:2585.85px;top:154.73px;font-size:50.29px;font-weight:700;color:#ffffff;transform:scaleX(0.9959);-webkit-text-stroke:1.3px #fff">A</div>
<div class="t" style="left:2622.25px;top:154.73px;font-size:50.29px;font-weight:700;color:#ffffff;transform:scaleX(0.8477);-webkit-text-stroke:1.3px #fff">B</div>
<div class="t" style="left:2294.30px;top:206.39px;font-size:36.63px;font-weight:400;color:#ffffff;transform:scaleX(1.0961);">T</div>
<div class="t" style="left:2336.19px;top:206.39px;font-size:36.63px;font-weight:400;color:#ffffff;transform:scaleX(1.1637);">e</div>
<div class="t" style="left:2379.69px;top:206.39px;font-size:36.63px;font-weight:400;color:#ffffff;transform:scaleX(1.1533);">m</div>
<div class="t" style="left:2435.12px;top:206.39px;font-size:36.63px;font-weight:400;color:#ffffff;transform:scaleX(1.2203);">p</div>
<div class="t" style="left:2481.35px;top:206.39px;font-size:36.63px;font-weight:400;color:#ffffff;transform:scaleX(0.9940);">l</div>
<div class="t" style="left:2510.53px;top:206.39px;font-size:36.63px;font-weight:400;color:#ffffff;transform:scaleX(0.9461);">a</div>
<div class="t" style="left:2553.18px;top:206.39px;font-size:36.63px;font-weight:400;color:#ffffff;transform:scaleX(1.2936);">t</div>
<div class="t" style="left:2588.33px;top:206.39px;font-size:36.63px;font-weight:400;color:#ffffff;transform:scaleX(1.1404);">e</div>
<div class="t" style="left:2632.69px;top:206.39px;font-size:36.63px;font-weight:400;color:#ffffff;transform:scaleX(1.0926);">s</div>
<div class="r" style="left:2863.00px;top:278.40px;width:25.40px;height:1393.00px;background:#141414;border-radius:12px"></div>
<div class="r" style="left:2870.00px;top:303.70px;width:12.00px;height:1311.00px;background:#9c9c9c;border-radius:6px"></div>
<div class="r" style="left:11.00px;top:1670.00px;width:2879.50px;height:48.00px;background:#0c0c0c;"></div>
<div class="r" style="left:11.00px;top:1717.50px;width:2879.50px;height:1.00px;background:#2c2c2c;"></div>
<div class="r" style="left:11.00px;top:1718.50px;width:2879.50px;height:32.50px;background:#141414;"></div>
<div class="t" style="left:189.34px;top:1685.52px;font-size:20.06px;font-weight:400;color:#ffffff;transform:scaleX(1.0454);">Contents</div>
<div class="r" style="left:298.70px;top:1676.00px;width:128.30px;height:36.00px;background:#ffef6e;border-radius:6px"></div>
<div class="t" style="left:312.49px;top:1685.52px;font-size:20.06px;font-weight:400;color:#141414;transform:scaleX(1.0379);">Dashboard</div>
<div class="r" style="left:440.00px;top:1676.00px;width:106.00px;height:36.00px;background:#ffef6e;border-radius:6px"></div>
<div class="t" style="left:453.05px;top:1685.52px;font-size:20.06px;font-weight:400;color:#141414;transform:scaleX(1.0006);">Revenue</div>
<div class="r" style="left:558.80px;top:1676.00px;width:157.80px;height:36.00px;background:#ffef6e;border-radius:6px"></div>
<div class="t" style="left:571.32px;top:1685.52px;font-size:20.06px;font-weight:400;color:#141414;transform:scaleX(0.9616);">COGS &amp; OPEX</div>
<div class="r" style="left:729.70px;top:1676.00px;width:89.10px;height:36.00px;background:#ffef6e;border-radius:6px"></div>
<div class="t" style="left:741.47px;top:1685.52px;font-size:20.06px;font-weight:400;color:#141414;transform:scaleX(1.0528);">Payroll</div>
<div class="r" style="left:932.20px;top:1676.00px;width:112.50px;height:36.00px;background:#ffef6e;border-radius:6px"></div>
<div class="t" style="left:944.38px;top:1685.52px;font-size:20.06px;font-weight:400;color:#141414;transform:scaleX(1.0040);">CapTable</div>
<div class="r" style="left:1057.90px;top:1676.00px;width:89.80px;height:36.00px;background:#ffef6e;border-radius:6px"></div>
<div class="t" style="left:1069.93px;top:1685.52px;font-size:20.06px;font-weight:400;color:#141414;transform:scaleX(1.0520);">Capital</div>
<div class="r" style="left:1160.80px;top:1676.00px;width:42.00px;height:36.00px;background:#4cb3ea;border-radius:6px"></div>
<div class="t" style="left:1173.32px;top:1685.52px;font-size:20.06px;font-weight:400;color:#141414;transform:scaleX(0.9085);">IS</div>
<div class="r" style="left:1215.60px;top:1676.00px;width:48.20px;height:36.00px;background:#4cb3ea;border-radius:6px"></div>
<div class="t" style="left:1228.07px;top:1685.52px;font-size:20.06px;font-weight:400;color:#141414;transform:scaleX(0.9151);">CF</div>
<div class="r" style="left:1276.60px;top:1676.00px;width:48.20px;height:36.00px;background:#4cb3ea;border-radius:6px"></div>
<div class="t" style="left:1289.01px;top:1685.52px;font-size:20.06px;font-weight:400;color:#141414;transform:scaleX(0.9053);">BS</div>
<div class="r" style="left:1337.60px;top:1676.00px;width:115.10px;height:36.00px;background:#4cb3ea;border-radius:6px"></div>
<div class="t" style="left:1350.60px;top:1685.52px;font-size:20.06px;font-weight:400;color:#141414;transform:scaleX(0.9925);">Scenarios</div>
<div class="r" style="left:1465.50px;top:1676.00px;width:115.00px;height:36.00px;background:#4cb3ea;border-radius:6px"></div>
<div class="t" style="left:1479.21px;top:1685.52px;font-size:20.06px;font-weight:400;color:#141414;transform:scaleX(1.0577);">Valuation</div>
<div class="r" style="left:1593.60px;top:1676.00px;width:113.80px;height:36.00px;background:#4cb3ea;border-radius:6px"></div>
<div class="t" style="left:1606.58px;top:1685.52px;font-size:20.06px;font-weight:400;color:#141414;transform:scaleX(1.0146);">Summary</div>
<div class="r" style="left:1721.00px;top:1676.00px;width:47.40px;height:36.00px;background:#4cb3ea;border-radius:6px"></div>
<div class="t" style="left:1733.11px;top:1685.52px;font-size:20.06px;font-weight:400;color:#141414;transform:scaleX(0.8454);">BE</div>
<div class="r" style="left:1782.00px;top:1676.00px;width:71.30px;height:36.00px;background:#4cb3ea;border-radius:6px"></div>
<div class="t" style="left:1794.29px;top:1685.52px;font-size:20.06px;font-weight:400;color:#141414;transform:scaleX(0.9155);">ROIC</div>
<div class="r" style="left:1867.00px;top:1676.00px;width:84.30px;height:36.00px;background:#4cb3ea;border-radius:6px"></div>
<div class="t" style="left:1880.00px;top:1685.52px;font-size:20.06px;font-weight:400;color:#141414;transform:scaleX(0.9855);">Charts</div>
<div class="r" style="left:1965.00px;top:1676.00px;width:63.60px;height:36.00px;background:#4cb3ea;border-radius:6px"></div>
<div class="t" style="left:1977.00px;top:1685.52px;font-size:20.06px;font-weight:400;color:#141414;transform:scaleX(0.9128);">KPIs</div>
<div class="r" style="left:291.90px;top:1680.00px;width:1.20px;height:27.00px;background:#3a3a3a;"></div>
<div class="r" style="left:432.90px;top:1680.00px;width:1.20px;height:27.00px;background:#3a3a3a;"></div>
<div class="r" style="left:551.60px;top:1680.00px;width:1.20px;height:27.00px;background:#3a3a3a;"></div>
<div class="r" style="left:722.60px;top:1680.00px;width:1.20px;height:27.00px;background:#3a3a3a;"></div>
<div class="r" style="left:824.80px;top:1680.00px;width:1.20px;height:27.00px;background:#3a3a3a;"></div>
<div class="r" style="left:924.70px;top:1680.00px;width:1.20px;height:27.00px;background:#3a3a3a;"></div>
<div class="r" style="left:1051.40px;top:1680.00px;width:1.20px;height:27.00px;background:#3a3a3a;"></div>
<div class="r" style="left:1153.70px;top:1680.00px;width:1.20px;height:27.00px;background:#3a3a3a;"></div>
<div class="r" style="left:1209.20px;top:1680.00px;width:1.20px;height:27.00px;background:#3a3a3a;"></div>
<div class="r" style="left:1269.80px;top:1680.00px;width:1.20px;height:27.00px;background:#3a3a3a;"></div>
<div class="r" style="left:1330.80px;top:1680.00px;width:1.20px;height:27.00px;background:#3a3a3a;"></div>
<div class="r" style="left:1458.60px;top:1680.00px;width:1.20px;height:27.00px;background:#3a3a3a;"></div>
<div class="r" style="left:1587.20px;top:1680.00px;width:1.20px;height:27.00px;background:#3a3a3a;"></div>
<div class="r" style="left:1713.90px;top:1680.00px;width:1.20px;height:27.00px;background:#3a3a3a;"></div>
<div class="r" style="left:1774.90px;top:1680.00px;width:1.20px;height:27.00px;background:#3a3a3a;"></div>
<div class="r" style="left:1859.80px;top:1680.00px;width:1.20px;height:27.00px;background:#3a3a3a;"></div>
<div class="r" style="left:1957.80px;top:1680.00px;width:1.20px;height:27.00px;background:#3a3a3a;"></div>
<div class="r" style="left:2035.10px;top:1680.00px;width:1.20px;height:27.00px;background:#3a3a3a;"></div>
<div class="r" style="left:2042.30px;top:1676.00px;width:35.70px;height:36.00px;background:#4cb3ea;border-radius:6px 0 0 6px"></div>
<div class="t" style="left:2053.92px;top:1685.52px;font-size:20.06px;font-weight:400;color:#141414;transform:scaleX(0.8558);">Sc</div>
<div class="r" style="left:2071.70px;top:1670.00px;width:10.30px;height:48.00px;background:#0c0c0c;"></div>
<div class="r" style="left:831.00px;top:1669.00px;width:88.80px;height:43.30px;background:#fffde9;border-radius:0 0 6px 6px"></div>
<div class="t" style="left:843.65px;top:1680.56px;font-size:21.08px;font-weight:400;color:#1a1a1a;transform:scaleX(0.8865);">CAPEX</div>
<div class="r" style="left:843.80px;top:1705.00px;width:62.80px;height:3.00px;background:#107c41;"></div>
<div class="r" style="left:2216.60px;top:1679.60px;width:644.00px;height:26.90px;background:#151515;border-radius:13px"></div>
<div class="r" style="left:2242.00px;top:1686.70px;width:54.80px;height:12.30px;background:#9c9c9c;border-radius:6px"></div>
<div class="t" style="left:26.38px;top:1727.51px;font-size:15.70px;font-weight:400;color:#e8e8e8;transform:scaleX(0.9488);">Ready</div>
<div class="t" style="left:172.81px;top:1727.51px;font-size:15.70px;font-weight:700;color:#e8e8e8;transform:scaleX(1.0046);">Accessibility: Investigate</div>
<div class="r" style="left:2445.20px;top:1718.80px;width:60.00px;height:30.40px;background:#262626;"></div>
<div class="r" style="left:2633.20px;top:1733.80px;width:10.20px;height:1.40px;background:#e0e0e0;"></div>
<div class="r" style="left:2653.60px;top:1733.50px;width:147.40px;height:2.20px;background:#b4b4b4;"></div>
<div class="r" style="left:2725.60px;top:1730.50px;width:1.40px;height:8.50px;background:#b4b4b4;"></div>
<div class="r" style="left:2733.00px;top:1726.00px;width:8.30px;height:17.20px;background:#b8b8b8;border-radius:1px"></div>
<div class="t" style="left:2839.41px;top:1727.99px;font-size:14.90px;font-weight:400;color:#e8e8e8;transform:scaleX(1.0482);">140%</div>
<svg class="s" style="left:0;top:0" width="2902" height="1762" viewBox="0 0 2902 1762"><rect x="38.2" y="35" width="19.4" height="24" rx="2.2" fill="#1e6d2c"/><path d="M40.4 35 H47.6 V43.2 H38.2 V37.2 Q38.2 35 40.4 35 Z" fill="#6fd05f"/><path d="M47.4 35 H55.4 Q57.6 35 57.6 37.2 V43.2 H47.4 Z" fill="#b6e47b"/><rect x="35" y="43" width="12.8" height="12.6" rx="2.2" fill="#0f5c33"/><path d="M38.6 46.2 L44.2 52.6 M44.2 46.2 L38.6 52.6" stroke="#ffffff" stroke-width="2.1"/><path d="M432 44 L439 51 L446 44" stroke="#fff" stroke-width="1.5" fill="none"/><circle cx="2488.6" cy="43.6" r="6.9" stroke="#fff" stroke-width="1.5" fill="none"/><path d="M2483.6 48.6 L2476.3 56.9" stroke="#fff" stroke-width="1.6" stroke-linecap="round"/><defs><clipPath id="avc"><circle cx="2570.9" cy="46.9" r="17.9"/></clipPath></defs><g clip-path="url(#avc)"><rect x="2552" y="28" width="38" height="38" fill="#a8c6c8"/><rect x="2552" y="28" width="38" height="12.5" fill="#b9c2de"/><ellipse cx="2571" cy="67" rx="17" ry="11" fill="#ddd6ce"/><path d="M2567 54 H2576.5 L2574 66 H2569.5 Z" fill="#8c6c5e"/><ellipse cx="2571.6" cy="46.2" rx="8" ry="10.3" fill="#9d7f70"/><path d="M2563.8 43 Q2564 35.5 2571.6 35.6 Q2579.5 35.8 2579.6 44 Q2576 38.5 2571.6 38.6 Q2567 38.6 2563.8 43 Z" fill="#7b6a63"/></g><circle cx="2570.9" cy="46.9" r="17.9" stroke="#d6d6d6" stroke-width="0.6" fill="none" opacity="0.6"/><path d="M2634.5 35.6 H2648 L2652.6 43.5 L2641.2 56.6 L2629.8 43.5 Z M2629.8 43.5 H2652.6 M2637.2 35.6 L2635.8 43.5 L2641.2 56.6 L2646.6 43.5 L2645.2 35.6 M2641.2 35.6" stroke="#fff" stroke-width="1.5" fill="none" stroke-linejoin="round"/><rect x="2703.4" y="45.4" width="15.3" height="1.5" fill="#fff"/><rect x="2775.6" y="43.3" width="11.5" height="11.5" rx="2" stroke="#fff" stroke-width="1.4" fill="none"/><path d="M2778.5 40.2 H2787.5 Q2790.6 40.2 2790.6 43.3 V52" stroke="#fff" stroke-width="1.4" fill="none"/><path d="M2847.5 39.5 L2862.5 54.8 M2862.5 39.5 L2847.5 54.8" stroke="#fff" stroke-width="1.5"/><path d="M2629.6 97.6 H2644.4 V108.2 H2634.5 L2630.4 112.2 V108.2 H2629.6 Z" stroke="#fff" stroke-width="1.5" fill="none" stroke-linejoin="round"/><path d="M2775.6 104 V112.5 H2791 V108.5" stroke="#0a0a0a" stroke-width="1.5" fill="none"/><path d="M2779 110 Q2779.5 102.5 2786.5 101.8 V98 L2792 103.2 L2786.5 108 V104.6 Q2781.5 105 2779 110 Z" stroke="#0a0a0a" stroke-width="1.4" fill="none" stroke-linejoin="round"/><path d="M2858 103.5 L2862 107.5 L2866 103.5" stroke="#0a0a0a" stroke-width="1.5" fill="none"/><path d="M62 147.8 H56.3 V182 H74" stroke="#e8a33d" stroke-width="2.4" fill="none"/><path d="M80 147.8 H85.8 V157.5" stroke="#e8a33d" stroke-width="2.4" fill="none"/><path d="M63.5 152.5 V147.3 H67.5 Q68 141.8 71.3 141.8 Q74.6 141.8 75 147.3 H79 V152.5 Z" stroke="#d6d6d6" stroke-width="1.6" fill="#292929"/><rect x="76.3" y="160" width="18.8" height="25" stroke="#d6d6d6" stroke-width="1.8" fill="#292929"/><path d="M67.5 224.5 L71.75 229 L76 224.5" stroke="#ffffff" stroke-width="1.8" fill="none"/><path d="M118.5 140.2 L127.8 158.5 M130.6 140.2 L121.2 158.5" stroke="#d6d6d6" stroke-width="1.3" fill="none"/><circle cx="119.8" cy="161.2" r="2.3" stroke="#4ba3e3" stroke-width="1.6" fill="none"/><circle cx="128.6" cy="161.2" r="2.3" stroke="#4ba3e3" stroke-width="1.6" fill="none"/><path d="M121.5 180 H112.6 V199 H120.5" stroke="#d6d6d6" stroke-width="1.6" fill="none"/><path d="M122.3 183.8 H130.2 L135.2 188.8 V202.2 H122.3 Z M129.8 184 V189.2 H135" stroke="#d6d6d6" stroke-width="1.6" fill="none" stroke-linejoin="round"/><path d="M125.2 194 H132.3 M125.2 197.8 H132.3" stroke="#d6d6d6" stroke-width="1.3"/><path d="M211.2 189.3 L215.2 193.8 L219.2 189.3" stroke="#ffffff" stroke-width="1.8" fill="none"/><path d="M112.5 230.2 L125.5 223.8 L131.5 233 L122.5 239.5 Z" stroke="#d6d6d6" stroke-width="1.5" fill="none" stroke-linejoin="round"/><path d="M116 232 L122.5 239 L129 234.2 L125.5 228.8 Z" fill="#e8a33d"/><path d="M126.8 224 L133.5 219 L136 222.8 L130 228.5" stroke="#d6d6d6" stroke-width="1.6" fill="none" stroke-linejoin="round"/><path d="M264.9 268.2 V257.9 H275.2" stroke="#d6d6d6" stroke-width="1.4" fill="none"/><path d="M267.7 260.7 L275.7 268.7 M269.7 268.7 H275.7 V262.7" stroke="#d6d6d6" stroke-width="1.4" fill="none"/><path d="M463 162 L467.25 167 L471.5 162" stroke="#ffffff" stroke-width="1.8" fill="none"/><path d="M531 162 L535.25 167 L539.5 162" stroke="#ffffff" stroke-width="1.8" fill="none"/><path d="M571 158.2 L573.6 154.2 L576.2 158.2" stroke="#4ba3e3" stroke-width="1.5" fill="none"/><path d="M609.2 153.8 L612.3 157.6 L615.4 153.8" stroke="#4ba3e3" stroke-width="1.5" fill="none"/><path d="M348.5 204 H357.5 M345.8 217.2 H354.8 M353 204 L350.3 217.2" stroke="#d6d6d6" stroke-width="1.5" fill="none"/><path d="M414.6 210 L419.20000000000005 214.8 L423.8 210" stroke="#ffffff" stroke-width="1.8" fill="none"/><rect x="443.85" y="200.05" width="1.5" height="1.5" fill="#dcdcdc"/><rect x="446.88" y="200.05" width="1.5" height="1.5" fill="#dcdcdc"/><rect x="449.91" y="200.05" width="1.5" height="1.5" fill="#dcdcdc"/><rect x="452.94" y="200.05" width="1.5" height="1.5" fill="#dcdcdc"/><rect x="455.97" y="200.05" width="1.5" height="1.5" fill="#dcdcdc"/><rect x="459.00" y="200.05" width="1.5" height="1.5" fill="#dcdcdc"/><rect x="462.03" y="200.05" width="1.5" height="1.5" fill="#dcdcdc"/><rect x="465.06" y="200.05" width="1.5" height="1.5" fill="#dcdcdc"/><rect x="443.85" y="203.05" width="1.5" height="1.5" fill="#dcdcdc"/><rect x="465.05" y="203.05" width="1.5" height="1.5" fill="#dcdcdc"/><rect x="443.85" y="206.05" width="1.5" height="1.5" fill="#dcdcdc"/><rect x="465.05" y="206.05" width="1.5" height="1.5" fill="#dcdcdc"/><rect x="443.85" y="209.05" width="1.5" height="1.5" fill="#dcdcdc"/><rect x="465.05" y="209.05" width="1.5" height="1.5" fill="#dcdcdc"/><rect x="443.85" y="212.05" width="1.5" height="1.5" fill="#dcdcdc"/><rect x="465.05" y="212.05" width="1.5" height="1.5" fill="#dcdcdc"/><rect x="443.85" y="215.05" width="1.5" height="1.5" fill="#dcdcdc"/><rect x="465.05" y="215.05" width="1.5" height="1.5" fill="#dcdcdc"/><rect x="443.85" y="218.05" width="1.5" height="1.5" fill="#dcdcdc"/><rect x="465.05" y="218.05" width="1.5" height="1.5" fill="#dcdcdc"/><rect x="454.45" y="203.05" width="1.5" height="1.5" fill="#dcdcdc"/><rect x="454.45" y="206.05" width="1.5" height="1.5" fill="#dcdcdc"/><rect x="454.45" y="212.05" width="1.5" height="1.5" fill="#dcdcdc"/><rect x="454.45" y="215.05" width="1.5" height="1.5" fill="#dcdcdc"/><rect x="454.45" y="218.05" width="1.5" height="1.5" fill="#dcdcdc"/><rect x="446.88" y="210.05" width="1.5" height="1.5" fill="#dcdcdc"/><rect x="449.91" y="210.05" width="1.5" height="1.5" fill="#dcdcdc"/><rect x="452.94" y="210.05" width="1.5" height="1.5" fill="#dcdcdc"/><rect x="455.97" y="210.05" width="1.5" height="1.5" fill="#dcdcdc"/><rect x="459.00" y="210.05" width="1.5" height="1.5" fill="#dcdcdc"/><rect x="462.03" y="210.05" width="1.5" height="1.5" fill="#dcdcdc"/><path d="M453.4 210.8 L455.2 209 L457 210.8 L455.2 212.6 Z" stroke="#dcdcdc" stroke-width="1" fill="none"/><path d="M479.6 210 L484.20000000000005 214.8 L488.8 210" stroke="#ffffff" stroke-width="1.8" fill="none"/><path d="M519.6 203.6 L512.7 210.5 L519.8 217.4 L526.6 210.6 L522.2 206.2" stroke="#d6d6d6" stroke-width="1.5" fill="none" stroke-linejoin="round"/><path d="M519.8 207.2 V201.9 Q519.8 200.3 521.3 200.3 Q522.8 200.3 522.8 201.9 V207.4" stroke="#d6d6d6" stroke-width="1.4" fill="none"/><path d="M526.2 205.6 Q531.2 206.2 530.8 215.4 Q529 212.2 526.6 210.4 Z" fill="#79b8ea"/><path d="M544.6 210 L549.2 214.8 L553.8 210" stroke="#ffffff" stroke-width="1.8" fill="none"/><path d="M605.2 210 L610.0 214.8 L614.8 210" stroke="#ffffff" stroke-width="1.8" fill="none"/><path d="M616.7 268.2 V257.9 H627" stroke="#d6d6d6" stroke-width="1.4" fill="none"/><path d="M619.5 260.7 L627.5 268.7 M621.5 268.7 H627.5 V262.7" stroke="#d6d6d6" stroke-width="1.4" fill="none"/><path d="M780 174.5 L797 157.5 M790.5 157.2 H797.3 V164" stroke="#4ba3e3" stroke-width="1.6" fill="none"/><path d="M805.8 161.5 L810.2 166.5 L814.6 161.5" stroke="#ffffff" stroke-width="1.8" fill="none"/><path d="M891 163.8 Q891.6 170.8 884.5 170.8 H880.6 M883.8 167.6 L880.5 170.8 L883.8 174" stroke="#4ba3e3" stroke-width="1.7" fill="none"/><path d="M784 210.8 H775.5 M779 207.3 L775.5 210.8 L779 214.3" stroke="#4ba3e3" stroke-width="1.6" fill="none"/><path d="M813.5 210.8 H822 M818.5 207.3 L822 210.8 L818.5 214.3" stroke="#4ba3e3" stroke-width="1.6" fill="none"/><rect x="867.5" y="200.5" width="21.8" height="21.2" stroke="#d6d6d6" stroke-width="1.5" fill="none"/><path d="M878.4 200.5 V204.5 M878.4 217.7 V221.7" stroke="#d6d6d6" stroke-width="1.5"/><rect x="867.5" y="204.8" width="21.8" height="12.8" stroke="#4ba3e3" stroke-width="1.5" fill="none"/><path d="M871.5 211.2 H885.3 M874.5 208.2 L871.5 211.2 L874.5 214.2 M882.3 208.2 L885.3 211.2 L882.3 214.2" stroke="#4ba3e3" stroke-width="1.5" fill="none"/><path d="M1050.2 210.5 L1054.2 215 L1058.2 210.5" stroke="#ffffff" stroke-width="1.8" fill="none"/><path d="M1066.7 267.8 V257.5 H1077" stroke="#d6d6d6" stroke-width="1.4" fill="none"/><path d="M1069.5 260.3 L1077.5 268.3 M1071.5 268.3 H1077.5 V262.3" stroke="#d6d6d6" stroke-width="1.4" fill="none"/><path d="M1301.2 162.2 L1305.5 166.8 L1309.8 162.2" stroke="#ffffff" stroke-width="1.8" fill="none"/><path d="M1138.2 209.8 L1142.6 214.8 L1147 209.8" stroke="#ffffff" stroke-width="1.8" fill="none"/><circle cx="1215.2" cy="208.5" r="5.2" fill="#d6d6d6"/><path d="M1218.8 210 Q1219.5 218.5 1209 221.4 L1208.6 219.3 Q1214.5 216.5 1214.2 211.5 Z" fill="#d6d6d6"/><path d="M1256 205 H1245.5 M1249 201.5 L1245.5 205 L1249 208.5" stroke="#4ba3e3" stroke-width="1.6" fill="none"/><path d="M1284 217.5 H1295 M1291.5 214 L1295 217.5 L1291.5 221" stroke="#4ba3e3" stroke-width="1.6" fill="none"/><path d="M1308.9 268.5 V258.2 H1319.2" stroke="#d6d6d6" stroke-width="1.4" fill="none"/><path d="M1311.7 261.0 L1319.7 269.0 M1313.7 269.0 H1319.7 V263.0" stroke="#d6d6d6" stroke-width="1.4" fill="none"/><rect x="1349" y="146.6" width="40.200000000000045" height="30.900000000000006" stroke="#d6d6d6" stroke-width="1.7" fill="none"/><path d="M1362.2 146.6 V177.5" stroke="#d6d6d6" stroke-width="1.5"/><path d="M1376 146.6 V177.5" stroke="#d6d6d6" stroke-width="1.5"/><rect x="1354.5" y="157" width="38" height="10" fill="#0f6cbd" stroke="#5aaee8" stroke-width="1.4"/><path d="M1362.2 157 V167 M1376 157 V167" stroke="#5aaee8" stroke-width="1.4"/><rect x="1344" y="156.3" width="9.8" height="11.4" fill="#292929"/><path d="M1354.5 159.3 H1349.5 M1354.5 164.7 H1349.5" stroke="#5aaee8" stroke-width="1.5" fill="none"/><path d="M1355.5 152 L1345.6 162 L1355.5 172" stroke="#5aaee8" stroke-width="1.8" fill="none"/><path d="M1364.2 224.4 L1368.4 228.8 L1372.6 224.4" stroke="#ffffff" stroke-width="1.8" fill="none"/><path d="M1413.8 155.8 V146.6 H1454.2 V177.5 H1413.8 V168.2" stroke="#d6d6d6" stroke-width="1.7" fill="none"/><path d="M1427.2 146.6 V177.5 M1440.8 146.6 V177.5" stroke="#d6d6d6" stroke-width="1.5"/><path d="M1419.2 157 H1438 L1443.5 162 L1438 167 H1419.2 Z" fill="#0f6cbd" stroke="#5aaee8" stroke-width="1.4"/><path d="M1427.2 157 V167" stroke="#5aaee8" stroke-width="1.4"/><path d="M1440.6 154.6 L1455.6 170.8 M1455.6 154.6 L1440.6 170.8" stroke="#e0514a" stroke-width="1.8"/><path d="M1429 224.4 L1433.4 228.8 L1437.8 224.4" stroke="#ffffff" stroke-width="1.8" fill="none"/><rect x="1479.8" y="146.6" width="40.200000000000045" height="30.900000000000006" stroke="#d6d6d6" stroke-width="1.7" fill="none"/><path d="M1490.2 146.6 V177.5" stroke="#d6d6d6" stroke-width="1.5"/><path d="M1509.8 146.6 V177.5" stroke="#d6d6d6" stroke-width="1.5"/><path d="M1479.8 156.8 H1520" stroke="#d6d6d6" stroke-width="1.5"/><path d="M1479.8 167.5 H1520" stroke="#d6d6d6" stroke-width="1.5"/><rect x="1490.2" y="156.8" width="19.6" height="10.7" fill="#0f6cbd" stroke="#5aaee8" stroke-width="1.4"/><path d="M1488.3 140.3 H1511.8 M1488.3 138 V142.6 M1511.8 138 V142.6" stroke="#5aaee8" stroke-width="1.6"/><path d="M1495 222.3 L1499.2 227 L1503.4 222.3" stroke="#ffffff" stroke-width="1.8" fill="none"/><path d="M1582.8 143.5 V141.8 H1566.5 L1575.5 152 L1566.5 162.2 H1583.5 V160.5" stroke="#d6d6d6" stroke-width="1.6" fill="none" stroke-linejoin="round"/><path d="M1695.2 150.2 L1699.2 154.8 L1703.2 150.2" stroke="#ffffff" stroke-width="1.8" fill="none"/><rect x="1563.7" y="181" width="22.5" height="20.2" stroke="#d6d6d6" stroke-width="1.6" fill="none"/><path d="M1563.7 184.2 H1586.2" stroke="#d6d6d6" stroke-width="1.3"/><path d="M1574.9 187 V197.5 M1570.8 193.8 L1574.9 197.8 L1579 193.8" stroke="#4ba3e3" stroke-width="1.6" fill="none"/><path d="M1620.2 189.6 L1624.2 194 L1628.2 189.6" stroke="#ffffff" stroke-width="1.8" fill="none"/><path d="M1564 232.3 L1577.3 219.3 L1586 228 L1572.8 241 Z" stroke="#b24ec8" stroke-width="1.7" fill="none" stroke-linejoin="round"/><path d="M1564.6 232.3 L1569.3 227.6 L1577.6 236.1 L1572.8 240.5 Z" fill="#b24ec8"/><path d="M1638.2 228.6 L1642.35 233 L1646.5 228.6" stroke="#ffffff" stroke-width="1.8" fill="none"/><path d="M1748.5 152.3 H1771.2 L1762.5 163.6 V175 H1757.4 V163.6 Z" stroke="#d6d6d6" stroke-width="1.6" fill="none" stroke-linejoin="round"/><path d="M1768.2 223.3 L1772.2 227.8 L1776.2 223.3" stroke="#ffffff" stroke-width="1.8" fill="none"/><circle cx="1826" cy="156.7" r="15.4" stroke="#d6d6d6" stroke-width="1.6" fill="none"/><path d="M1815 167.7 L1799 184" stroke="#d6d6d6" stroke-width="1.7"/><path d="M1842.6 223.3 L1846.6 227.8 L1850.6 223.3" stroke="#ffffff" stroke-width="1.8" fill="none"/><rect x="1895.6" y="141.3" width="40.6" height="40.8" stroke="#d9582b" stroke-width="2" fill="none"/><rect x="1900.2" y="145.8" width="14" height="14" stroke="#d9582b" stroke-width="1.8" fill="none"/><rect x="1917.6" y="145.8" width="14" height="14" stroke="#d9582b" stroke-width="1.8" fill="none"/><rect x="1900.2" y="163.4" width="14" height="14" stroke="#d9582b" stroke-width="1.8" fill="none"/><rect x="1917.6" y="163.4" width="14" height="14" stroke="#d9582b" stroke-width="1.8" fill="none"/><rect x="1989.6" y="141.6" width="40.8" height="41" stroke="#d6d6d6" stroke-width="1.6" fill="none"/><path d="M1989.6 155 H1998 M2022 155 H2030.4 M1989.6 168.6 H2030.4 M2003.2 168.6 V182.6 M2017 168.6 V182.6" stroke="#8a8a8a" stroke-width="1.3"/><circle cx="2008.8" cy="159.8" r="10.2" stroke="#d6d6d6" stroke-width="1.6" fill="#292929"/><path d="M2016 167 L2030 182" stroke="#d6d6d6" stroke-width="1.8"/><rect x="2002.6" y="158.2" width="2.6" height="6.8" fill="#8a8a8a"/><rect x="2006.8" y="152.8" width="2.6" height="12.2" fill="#b4b4b4"/><rect x="2011.1" y="155.5" width="2.6" height="9.5" fill="#4ba3e3"/><circle cx="2212.3" cy="198.8" r="56" fill="#ffffff"/><rect x="2181.6" y="173.2" width="61.4" height="52.6" fill="#5d63e8"/><rect x="2190" y="181.5" width="19.3" height="14.3" fill="#ffffff"/><rect x="2216.3" y="181.5" width="19.3" height="14.3" fill="#ffffff"/><rect x="2190" y="203.4" width="19.3" height="14.3" fill="#ffffff"/><rect x="2216.3" y="203.4" width="19.3" height="14.3" fill="#ffffff"/><path d="M2425.2 165.6 A13.4 13.4 0 1 0 2438.2 165.6" stroke="#fff" stroke-width="8.6" fill="none"/><path d="M2431.4 158.8 V177.6" stroke="#fff" stroke-width="8.8" stroke-linecap="round"/><path d="M2850 252.5 L2857.5 261.8 L2865 252.5" stroke="#ffffff" stroke-width="1.6" fill="none"/><path d="M2869.3 296 L2876 285.8 L2882.8 296 Z" fill="#9a9a9a" stroke="#9a9a9a" stroke-width="1.2" stroke-linejoin="round"/><path d="M2869.6 1654.4 L2876.2 1664 L2882.8 1654.4 Z" fill="#9a9a9a" stroke="#9a9a9a" stroke-width="1.2" stroke-linejoin="round"/><path d="M55.2 1686 L46.4 1693 L55.2 1700" stroke="#9a9a9a" stroke-width="1.6" fill="none"/><path d="M95.6 1686 L104.2 1693 L95.6 1700" stroke="#d8d8d8" stroke-width="1.6" fill="none"/><path d="M819 1670 Q831 1670 831 1682 V1670 Z" fill="#fffde9"/><path d="M931.8 1670 Q919.8 1670 919.8 1682 V1670 Z" fill="#fffde9"/><circle cx="2088.5" cy="1692.8" r="2.1" fill="#e8e8e8"/><circle cx="2095.2" cy="1692.8" r="2.1" fill="#e8e8e8"/><circle cx="2101.9" cy="1692.8" r="2.1" fill="#e8e8e8"/><path d="M2134.5 1693.3 H2151.8 M2143.2 1684.7 V1702" stroke="#e0e0e0" stroke-width="1.6"/><circle cx="2191.7" cy="1687.5" r="1.6" fill="#e0e0e0"/><circle cx="2191.7" cy="1694.3" r="1.6" fill="#e0e0e0"/><circle cx="2191.7" cy="1701.1" r="1.6" fill="#e0e0e0"/><path d="M2234.3 1686 L2223.3 1693 L2234.3 1700 Z" fill="#9a9a9a" stroke="#9a9a9a" stroke-linejoin="round"/><path d="M2843 1686 L2853.6 1693 L2843 1700 Z" fill="#9a9a9a" stroke="#9a9a9a" stroke-linejoin="round"/><path d="M100 1726.8 H120.6 V1733.5 M100 1726.8 V1744.6 H106.5 M100 1729.8 H120.6 M102.5 1732.6 H107 M102.5 1735.7 H106 M102.5 1738.8 H105.5" stroke="#f2f2f2" stroke-width="1.6" fill="none"/><circle cx="113.9" cy="1739.2" r="6" stroke="#f2f2f2" stroke-width="1.6" fill="#141414"/><circle cx="113.9" cy="1739.2" r="2.8" fill="#f2f2f2"/><circle cx="155.4" cy="1727.4" r="2.5" stroke="#f0f0f0" stroke-width="1.5" fill="#141414"/><path d="M147.4 1731.2 Q147.6 1729.4 149.4 1730 L153.4 1731.3 H157.4 L161.6 1730 Q163.6 1729.5 163.8 1731.3 Q163.8 1732.4 162.3 1732.9 L158.6 1734.1 L158.3 1736.8 M152.5 1734.1 L148.8 1732.9 Q147.3 1732.5 147.4 1731.2 M152.5 1734.1 L152.3 1737.8 L149.7 1742.8 Q150.2 1745 152.2 1744 L155.2 1739 L156.6 1741" stroke="#f0f0f0" stroke-width="1.4" fill="none" stroke-linejoin="round"/><path d="M157.6 1735.7 L166.9 1745.2 M166.9 1735.7 L157.6 1745.2" stroke="#f0f0f0" stroke-width="1.4"/><rect x="2465" y="1724.3" width="18" height="19.4" stroke="#e0e0e0" stroke-width="1.4" fill="none"/><path d="M2471 1724.3 V1743.7 M2477 1724.3 V1743.7 M2465 1730.8 H2483 M2465 1737.2 H2483" stroke="#e0e0e0" stroke-width="1.2"/><rect x="2524.5" y="1724.3" width="20.5" height="19.4" stroke="#e0e0e0" stroke-width="1.4" fill="none"/><rect x="2528.5" y="1728.3" width="12.5" height="11.4" stroke="#e0e0e0" stroke-width="1.2" fill="none"/><path d="M2531 1731.5 H2538.5 M2531 1734 H2538.5 M2531 1736.5 H2538.5" stroke="#e0e0e0" stroke-width="1"/><path d="M2584.5 1743.7 V1724.3 H2605 V1743.7 Z M2591.5 1724.3 V1734.5 H2598 V1724.3" stroke="#e0e0e0" stroke-width="1.4" fill="none"/><path d="M2809 1734.5 H2820.7 M2814.85 1728.7 V1740.3" stroke="#e0e0e0" stroke-width="1.4"/></svg>
</body></html>
